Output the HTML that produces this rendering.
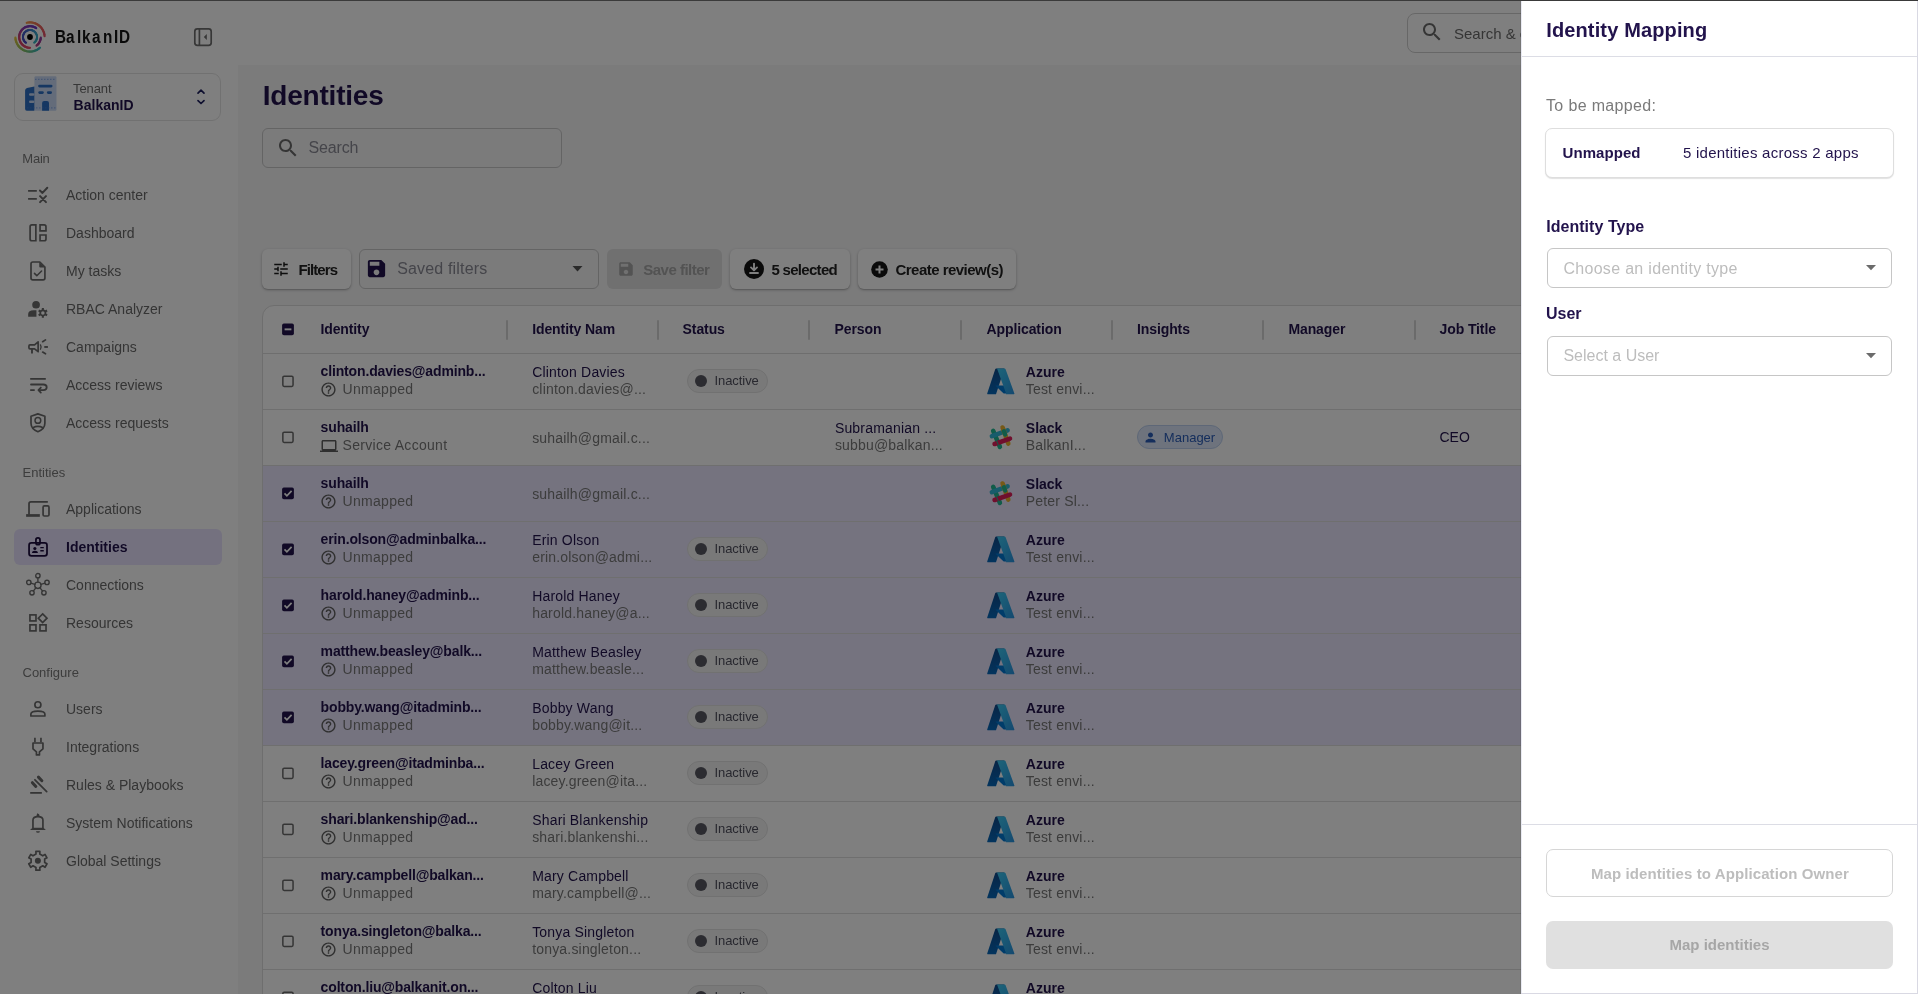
<!DOCTYPE html>
<html><head><meta charset="utf-8"><title>Identities</title>
<style>
html,body{margin:0;padding:0;width:1918px;height:994px;overflow:hidden;background:#fff;}
body{position:relative;font-family:"Liberation Sans",sans-serif;}
#root{position:absolute;left:0;top:0;width:1918px;height:994px;overflow:hidden;will-change:transform;}
.t{position:absolute;white-space:nowrap;line-height:1;font-family:"Liberation Sans",sans-serif;}
svg{overflow:visible}
</style></head><body>
<div id="root"><div style="position:absolute;left:0px;top:0px;width:1918px;height:994px;background:#fff"></div>
<div style="position:absolute;left:238px;top:65px;width:1680px;height:929px;background:#f6f6f7"></div>
<svg style="position:absolute;left:14px;top:21px;" width="32" height="32" viewBox="0 0 32 32"><path d="M12.72 1.77 A14.6 14.6 0 0 1 14.28 1.50" stroke="#f4974b" stroke-width="2.2" fill="none" stroke-linecap="round"/><path d="M14.28 1.50 A14.6 14.6 0 0 1 15.87 1.40" stroke="#f3914d" stroke-width="2.2" fill="none" stroke-linecap="round"/><path d="M15.87 1.40 A14.6 14.6 0 0 1 17.46 1.47" stroke="#f28b4f" stroke-width="2.2" fill="none" stroke-linecap="round"/><path d="M17.46 1.47 A14.6 14.6 0 0 1 19.04 1.72" stroke="#f18551" stroke-width="2.2" fill="none" stroke-linecap="round"/><path d="M19.04 1.72 A14.6 14.6 0 0 1 20.57 2.13" stroke="#f07f53" stroke-width="2.2" fill="none" stroke-linecap="round"/><path d="M20.57 2.13 A14.6 14.6 0 0 1 22.05 2.71" stroke="#ef7955" stroke-width="2.2" fill="none" stroke-linecap="round"/><path d="M22.05 2.71 A14.6 14.6 0 0 1 23.46 3.45" stroke="#ee7357" stroke-width="2.2" fill="none" stroke-linecap="round"/><path d="M23.46 3.45 A14.6 14.6 0 0 1 24.79 4.34" stroke="#ed6d59" stroke-width="2.2" fill="none" stroke-linecap="round"/><path d="M24.79 4.34 A14.6 14.6 0 0 1 26.00 5.37" stroke="#eb685b" stroke-width="2.2" fill="none" stroke-linecap="round"/><path d="M26.00 5.37 A14.6 14.6 0 0 1 27.10 6.52" stroke="#ea655d" stroke-width="2.2" fill="none" stroke-linecap="round"/><path d="M27.10 6.52 A14.6 14.6 0 0 1 28.07 7.78" stroke="#e9625f" stroke-width="2.2" fill="none" stroke-linecap="round"/><path d="M28.07 7.78 A14.6 14.6 0 0 1 28.89 9.15" stroke="#e85f61" stroke-width="2.2" fill="none" stroke-linecap="round"/><path d="M28.89 9.15 A14.6 14.6 0 0 1 29.56 10.59" stroke="#e65b63" stroke-width="2.2" fill="none" stroke-linecap="round"/><path d="M29.56 10.59 A14.6 14.6 0 0 1 30.07 12.10" stroke="#e55865" stroke-width="2.2" fill="none" stroke-linecap="round"/><path d="M30.07 12.10 A14.6 14.6 0 0 1 30.41 13.65" stroke="#e45567" stroke-width="2.2" fill="none" stroke-linecap="round"/><path d="M30.41 13.65 A14.6 14.6 0 0 1 30.58 15.24" stroke="#e35269" stroke-width="2.2" fill="none" stroke-linecap="round"/><path d="M1.41 16.51 A14.6 14.6 0 0 0 1.55 18.09" stroke="#e4c23f" stroke-width="2.2" fill="none" stroke-linecap="round"/><path d="M1.55 18.09 A14.6 14.6 0 0 0 1.86 19.65" stroke="#dbc242" stroke-width="2.2" fill="none" stroke-linecap="round"/><path d="M1.86 19.65 A14.6 14.6 0 0 0 2.34 21.16" stroke="#d1c145" stroke-width="2.2" fill="none" stroke-linecap="round"/><path d="M2.34 21.16 A14.6 14.6 0 0 0 2.99 22.62" stroke="#c8c148" stroke-width="2.2" fill="none" stroke-linecap="round"/><path d="M2.99 22.62 A14.6 14.6 0 0 0 3.78 23.99" stroke="#bec14b" stroke-width="2.2" fill="none" stroke-linecap="round"/><path d="M3.78 23.99 A14.6 14.6 0 0 0 4.72 25.27" stroke="#b5c04e" stroke-width="2.2" fill="none" stroke-linecap="round"/><path d="M4.72 25.27 A14.6 14.6 0 0 0 5.80 26.44" stroke="#abc051" stroke-width="2.2" fill="none" stroke-linecap="round"/><path d="M5.80 26.44 A14.6 14.6 0 0 0 6.99 27.49" stroke="#a2c054" stroke-width="2.2" fill="none" stroke-linecap="round"/><path d="M6.99 27.49 A14.6 14.6 0 0 0 8.29 28.40" stroke="#98bf57" stroke-width="2.2" fill="none" stroke-linecap="round"/><path d="M8.29 28.40 A14.6 14.6 0 0 0 9.69 29.16" stroke="#8fbf5a" stroke-width="2.2" fill="none" stroke-linecap="round"/><path d="M9.69 29.16 A14.6 14.6 0 0 0 11.16 29.77" stroke="#86be64" stroke-width="2.2" fill="none" stroke-linecap="round"/><path d="M11.16 29.77 A14.6 14.6 0 0 0 12.68 30.22" stroke="#7ebe6d" stroke-width="2.2" fill="none" stroke-linecap="round"/><path d="M12.68 30.22 A14.6 14.6 0 0 0 14.24 30.49" stroke="#76bd77" stroke-width="2.2" fill="none" stroke-linecap="round"/><path d="M14.24 30.49 A14.6 14.6 0 0 0 15.83 30.60" stroke="#6dbd80" stroke-width="2.2" fill="none" stroke-linecap="round"/><path d="M15.83 30.60 A14.6 14.6 0 0 0 17.42 30.53" stroke="#65bc89" stroke-width="2.2" fill="none" stroke-linecap="round"/><path d="M17.42 30.53 A14.6 14.6 0 0 0 18.99 30.29" stroke="#5dbb93" stroke-width="2.2" fill="none" stroke-linecap="round"/><path d="M18.99 30.29 A14.6 14.6 0 0 0 20.52 29.88" stroke="#54bb9c" stroke-width="2.2" fill="none" stroke-linecap="round"/><path d="M20.52 29.88 A14.6 14.6 0 0 0 22.00 29.31" stroke="#4cbaa5" stroke-width="2.2" fill="none" stroke-linecap="round"/><path d="M22.00 29.31 A14.6 14.6 0 0 0 23.42 28.58" stroke="#44baaf" stroke-width="2.2" fill="none" stroke-linecap="round"/><path d="M23.42 28.58 A14.6 14.6 0 0 0 24.74 27.70" stroke="#3bb9b8" stroke-width="2.2" fill="none" stroke-linecap="round"/><path d="M24.74 27.70 A14.6 14.6 0 0 0 25.96 26.68" stroke="#33b8c1" stroke-width="2.2" fill="none" stroke-linecap="round"/><path d="M22.19 7.15 A10.8 10.8 0 0 0 21.21 6.54" stroke="#6b38c7" stroke-width="2.2" fill="none" stroke-linecap="round"/><path d="M21.21 6.54 A10.8 10.8 0 0 0 20.17 6.04" stroke="#6e38c5" stroke-width="2.2" fill="none" stroke-linecap="round"/><path d="M20.17 6.04 A10.8 10.8 0 0 0 19.08 5.65" stroke="#7138c3" stroke-width="2.2" fill="none" stroke-linecap="round"/><path d="M19.08 5.65 A10.8 10.8 0 0 0 17.95 5.38" stroke="#7339c1" stroke-width="2.2" fill="none" stroke-linecap="round"/><path d="M17.95 5.38 A10.8 10.8 0 0 0 16.81 5.23" stroke="#7639bf" stroke-width="2.2" fill="none" stroke-linecap="round"/><path d="M16.81 5.23 A10.8 10.8 0 0 0 15.65 5.21" stroke="#7839bd" stroke-width="2.2" fill="none" stroke-linecap="round"/><path d="M15.65 5.21 A10.8 10.8 0 0 0 14.50 5.31" stroke="#7b39bb" stroke-width="2.2" fill="none" stroke-linecap="round"/><path d="M14.50 5.31 A10.8 10.8 0 0 0 13.36 5.53" stroke="#7e39b9" stroke-width="2.2" fill="none" stroke-linecap="round"/><path d="M13.36 5.53 A10.8 10.8 0 0 0 12.26 5.87" stroke="#8039b7" stroke-width="2.2" fill="none" stroke-linecap="round"/><path d="M12.26 5.87 A10.8 10.8 0 0 0 11.19 6.33" stroke="#833ab5" stroke-width="2.2" fill="none" stroke-linecap="round"/><path d="M11.19 6.33 A10.8 10.8 0 0 0 10.19 6.90" stroke="#853ab3" stroke-width="2.2" fill="none" stroke-linecap="round"/><path d="M10.19 6.90 A10.8 10.8 0 0 0 9.25 7.57" stroke="#883ab1" stroke-width="2.2" fill="none" stroke-linecap="round"/><path d="M9.25 7.57 A10.8 10.8 0 0 0 8.38 8.34" stroke="#8c3aae" stroke-width="2.2" fill="none" stroke-linecap="round"/><path d="M8.38 8.34 A10.8 10.8 0 0 0 7.61 9.20" stroke="#943ba7" stroke-width="2.2" fill="none" stroke-linecap="round"/><path d="M7.61 9.20 A10.8 10.8 0 0 0 6.93 10.14" stroke="#9c3c9f" stroke-width="2.2" fill="none" stroke-linecap="round"/><path d="M6.93 10.14 A10.8 10.8 0 0 0 6.35 11.14" stroke="#a43c97" stroke-width="2.2" fill="none" stroke-linecap="round"/><path d="M6.35 11.14 A10.8 10.8 0 0 0 5.89 12.21" stroke="#ac3d90" stroke-width="2.2" fill="none" stroke-linecap="round"/><path d="M5.89 12.21 A10.8 10.8 0 0 0 5.54 13.31" stroke="#b43e88" stroke-width="2.2" fill="none" stroke-linecap="round"/><path d="M5.54 13.31 A10.8 10.8 0 0 0 5.31 14.44" stroke="#bc3e81" stroke-width="2.2" fill="none" stroke-linecap="round"/><path d="M5.31 14.44 A10.8 10.8 0 0 0 5.21 15.60" stroke="#c43f79" stroke-width="2.2" fill="none" stroke-linecap="round"/><path d="M5.21 15.60 A10.8 10.8 0 0 0 5.23 16.75" stroke="#cc4072" stroke-width="2.2" fill="none" stroke-linecap="round"/><path d="M5.23 16.75 A10.8 10.8 0 0 0 5.37 17.90" stroke="#d1406e" stroke-width="2.2" fill="none" stroke-linecap="round"/><path d="M5.37 17.90 A10.8 10.8 0 0 0 5.63 19.03" stroke="#d2416d" stroke-width="2.2" fill="none" stroke-linecap="round"/><path d="M5.63 19.03 A10.8 10.8 0 0 0 6.02 20.12" stroke="#d3426d" stroke-width="2.2" fill="none" stroke-linecap="round"/><path d="M6.02 20.12 A10.8 10.8 0 0 0 6.52 21.17" stroke="#d4426c" stroke-width="2.2" fill="none" stroke-linecap="round"/><path d="M6.52 21.17 A10.8 10.8 0 0 0 7.12 22.15" stroke="#d5436b" stroke-width="2.2" fill="none" stroke-linecap="round"/><path d="M7.12 22.15 A10.8 10.8 0 0 0 7.83 23.07" stroke="#d6446b" stroke-width="2.2" fill="none" stroke-linecap="round"/><path d="M7.83 23.07 A10.8 10.8 0 0 0 8.63 23.90" stroke="#d7456a" stroke-width="2.2" fill="none" stroke-linecap="round"/><path d="M8.63 23.90 A10.8 10.8 0 0 0 9.52 24.64" stroke="#d9456a" stroke-width="2.2" fill="none" stroke-linecap="round"/><path d="M9.52 24.64 A10.8 10.8 0 0 0 10.48 25.29" stroke="#da4669" stroke-width="2.2" fill="none" stroke-linecap="round"/><path d="M10.48 25.29 A10.8 10.8 0 0 0 11.51 25.82" stroke="#db4769" stroke-width="2.2" fill="none" stroke-linecap="round"/><path d="M11.51 25.82 A10.8 10.8 0 0 0 12.59 26.25" stroke="#dc4868" stroke-width="2.2" fill="none" stroke-linecap="round"/><path d="M12.59 26.25 A10.8 10.8 0 0 0 13.70 26.55" stroke="#dd4867" stroke-width="2.2" fill="none" stroke-linecap="round"/><path d="M13.70 26.55 A10.8 10.8 0 0 0 14.84 26.74" stroke="#de4967" stroke-width="2.2" fill="none" stroke-linecap="round"/><path d="M14.84 26.74 A10.8 10.8 0 0 0 16.00 26.80" stroke="#df4a66" stroke-width="2.2" fill="none" stroke-linecap="round"/><path d="M26.79 16.57 A10.8 10.8 0 0 1 26.66 17.74" stroke="#8c3aa6" stroke-width="2.2" fill="none" stroke-linecap="round"/><path d="M26.66 17.74 A10.8 10.8 0 0 1 26.41 18.89" stroke="#923aa0" stroke-width="2.2" fill="none" stroke-linecap="round"/><path d="M26.41 18.89 A10.8 10.8 0 0 1 26.03 20.00" stroke="#963a9c" stroke-width="2.2" fill="none" stroke-linecap="round"/><path d="M26.03 20.00 A10.8 10.8 0 0 1 25.54 21.07" stroke="#9c3a96" stroke-width="2.2" fill="none" stroke-linecap="round"/><path d="M25.54 21.07 A10.8 10.8 0 0 1 24.93 22.08" stroke="#a03a92" stroke-width="2.2" fill="none" stroke-linecap="round"/><path d="M24.93 22.08 A10.8 10.8 0 0 1 24.21 23.01" stroke="#a63a8c" stroke-width="2.2" fill="none" stroke-linecap="round"/><path d="M24.21 23.01 A10.8 10.8 0 0 1 23.40 23.87" stroke="#aa3a88" stroke-width="2.2" fill="none" stroke-linecap="round"/><path d="M23.40 23.87 A10.8 10.8 0 0 1 22.50 24.63" stroke="#b03a82" stroke-width="2.2" fill="none" stroke-linecap="round"/><path d="M12.09 21.80 A7.0 7.0 0 0 1 11.50 21.36" stroke="#4a47c0" stroke-width="2.0" fill="none" stroke-linecap="round"/><path d="M11.50 21.36 A7.0 7.0 0 0 1 10.96 20.86" stroke="#4948c1" stroke-width="2.0" fill="none" stroke-linecap="round"/><path d="M10.96 20.86 A7.0 7.0 0 0 1 10.47 20.30" stroke="#4949c1" stroke-width="2.0" fill="none" stroke-linecap="round"/><path d="M10.47 20.30 A7.0 7.0 0 0 1 10.05 19.69" stroke="#484bc1" stroke-width="2.0" fill="none" stroke-linecap="round"/><path d="M10.05 19.69 A7.0 7.0 0 0 1 9.70 19.05" stroke="#474cc2" stroke-width="2.0" fill="none" stroke-linecap="round"/><path d="M9.70 19.05 A7.0 7.0 0 0 1 9.41 18.37" stroke="#474dc2" stroke-width="2.0" fill="none" stroke-linecap="round"/><path d="M9.41 18.37 A7.0 7.0 0 0 1 9.20 17.66" stroke="#464fc3" stroke-width="2.0" fill="none" stroke-linecap="round"/><path d="M9.20 17.66 A7.0 7.0 0 0 1 9.06 16.93" stroke="#4650c3" stroke-width="2.0" fill="none" stroke-linecap="round"/><path d="M9.06 16.93 A7.0 7.0 0 0 1 9.00 16.20" stroke="#4552c4" stroke-width="2.0" fill="none" stroke-linecap="round"/><path d="M9.00 16.20 A7.0 7.0 0 0 1 9.02 15.46" stroke="#4553c4" stroke-width="2.0" fill="none" stroke-linecap="round"/><path d="M9.02 15.46 A7.0 7.0 0 0 1 9.12 14.73" stroke="#4454c4" stroke-width="2.0" fill="none" stroke-linecap="round"/><path d="M9.12 14.73 A7.0 7.0 0 0 1 9.29 14.01" stroke="#4356c5" stroke-width="2.0" fill="none" stroke-linecap="round"/><path d="M9.29 14.01 A7.0 7.0 0 0 1 9.53 13.32" stroke="#4357c5" stroke-width="2.0" fill="none" stroke-linecap="round"/><path d="M9.53 13.32 A7.0 7.0 0 0 1 9.85 12.65" stroke="#4258c6" stroke-width="2.0" fill="none" stroke-linecap="round"/><path d="M9.85 12.65 A7.0 7.0 0 0 1 10.24 12.02" stroke="#425ac6" stroke-width="2.0" fill="none" stroke-linecap="round"/><path d="M10.24 12.02 A7.0 7.0 0 0 1 10.69 11.44" stroke="#415bc6" stroke-width="2.0" fill="none" stroke-linecap="round"/><path d="M10.69 11.44 A7.0 7.0 0 0 1 11.20 10.90" stroke="#415cc7" stroke-width="2.0" fill="none" stroke-linecap="round"/><path d="M11.20 10.90 A7.0 7.0 0 0 1 11.76 10.43" stroke="#405ec7" stroke-width="2.0" fill="none" stroke-linecap="round"/><path d="M11.76 10.43 A7.0 7.0 0 0 1 12.37 10.01" stroke="#3f5fc8" stroke-width="2.0" fill="none" stroke-linecap="round"/><path d="M12.37 10.01 A7.0 7.0 0 0 1 13.02 9.66" stroke="#3f61c8" stroke-width="2.0" fill="none" stroke-linecap="round"/><path d="M13.02 9.66 A7.0 7.0 0 0 1 13.71 9.39" stroke="#3f66c8" stroke-width="2.0" fill="none" stroke-linecap="round"/><path d="M13.71 9.39 A7.0 7.0 0 0 1 14.42 9.18" stroke="#3e6ac8" stroke-width="2.0" fill="none" stroke-linecap="round"/><path d="M14.42 9.18 A7.0 7.0 0 0 1 15.14 9.05" stroke="#3e6fc8" stroke-width="2.0" fill="none" stroke-linecap="round"/><path d="M15.14 9.05 A7.0 7.0 0 0 1 15.88 9.00" stroke="#3e73c8" stroke-width="2.0" fill="none" stroke-linecap="round"/><path d="M15.88 9.00 A7.0 7.0 0 0 1 16.62 9.03" stroke="#3d78c8" stroke-width="2.0" fill="none" stroke-linecap="round"/><path d="M16.62 9.03 A7.0 7.0 0 0 1 17.35 9.13" stroke="#3d7cc8" stroke-width="2.0" fill="none" stroke-linecap="round"/><path d="M17.35 9.13 A7.0 7.0 0 0 1 18.06 9.31" stroke="#3c80c8" stroke-width="2.0" fill="none" stroke-linecap="round"/><path d="M18.06 9.31 A7.0 7.0 0 0 1 18.75 9.56" stroke="#3c85c8" stroke-width="2.0" fill="none" stroke-linecap="round"/><path d="M18.75 9.56 A7.0 7.0 0 0 1 19.42 9.89" stroke="#3c89c8" stroke-width="2.0" fill="none" stroke-linecap="round"/><path d="M19.42 9.89 A7.0 7.0 0 0 1 20.04 10.28" stroke="#3b8ec8" stroke-width="2.0" fill="none" stroke-linecap="round"/><path d="M20.04 10.28 A7.0 7.0 0 0 1 20.62 10.74" stroke="#3b92c8" stroke-width="2.0" fill="none" stroke-linecap="round"/><path d="M20.62 10.74 A7.0 7.0 0 0 1 21.15 11.26" stroke="#3b97c8" stroke-width="2.0" fill="none" stroke-linecap="round"/><path d="M21.15 11.26 A7.0 7.0 0 0 1 21.62 11.82" stroke="#3a9bc8" stroke-width="2.0" fill="none" stroke-linecap="round"/><path d="M21.62 11.82 A7.0 7.0 0 0 1 22.03 12.44" stroke="#3aa0c8" stroke-width="2.0" fill="none" stroke-linecap="round"/><path d="M22.03 12.44 A7.0 7.0 0 0 1 22.37 13.09" stroke="#3aa1c8" stroke-width="2.0" fill="none" stroke-linecap="round"/><path d="M22.37 13.09 A7.0 7.0 0 0 1 22.64 13.78" stroke="#3aa3c7" stroke-width="2.0" fill="none" stroke-linecap="round"/><path d="M22.64 13.78 A7.0 7.0 0 0 1 22.84 14.49" stroke="#39a4c6" stroke-width="2.0" fill="none" stroke-linecap="round"/><path d="M22.84 14.49 A7.0 7.0 0 0 1 22.96 15.22" stroke="#39a5c6" stroke-width="2.0" fill="none" stroke-linecap="round"/><path d="M22.96 15.22 A7.0 7.0 0 0 1 23.00 15.95" stroke="#39a7c5" stroke-width="2.0" fill="none" stroke-linecap="round"/><path d="M23.00 15.95 A7.0 7.0 0 0 1 22.97 16.69" stroke="#39a8c5" stroke-width="2.0" fill="none" stroke-linecap="round"/><path d="M22.97 16.69 A7.0 7.0 0 0 1 22.85 17.42" stroke="#39aac4" stroke-width="2.0" fill="none" stroke-linecap="round"/><path d="M22.85 17.42 A7.0 7.0 0 0 1 22.67 18.13" stroke="#38abc4" stroke-width="2.0" fill="none" stroke-linecap="round"/><path d="M22.67 18.13 A7.0 7.0 0 0 1 22.41 18.82" stroke="#38acc3" stroke-width="2.0" fill="none" stroke-linecap="round"/><path d="M22.41 18.82 A7.0 7.0 0 0 1 22.07 19.48" stroke="#38aec2" stroke-width="2.0" fill="none" stroke-linecap="round"/><path d="M22.07 19.48 A7.0 7.0 0 0 1 21.67 20.10" stroke="#38afc2" stroke-width="2.0" fill="none" stroke-linecap="round"/><path d="M21.67 20.10 A7.0 7.0 0 0 1 21.21 20.68" stroke="#38b1c1" stroke-width="2.0" fill="none" stroke-linecap="round"/><path d="M21.21 20.68 A7.0 7.0 0 0 1 20.69 21.20" stroke="#37b2c1" stroke-width="2.0" fill="none" stroke-linecap="round"/><path d="M20.69 21.20 A7.0 7.0 0 0 1 20.11 21.66" stroke="#37b3c0" stroke-width="2.0" fill="none" stroke-linecap="round"/><circle cx="16" cy="16" r="2.9" fill="#000"/></svg>
<div class="t" style="left:54.5px;top:27.76px;font-size:18px;font-weight:700;color:#151515;transform:scaleX(0.85);transform-origin:0 0;">B</div>
<div class="t" style="left:66.2px;top:27.76px;font-size:18px;font-weight:700;color:#151515;transform:scaleX(0.85);transform-origin:0 0;">a</div>
<div class="t" style="left:77.2px;top:27.76px;font-size:18px;font-weight:700;color:#151515;transform:scaleX(0.85);transform-origin:0 0;">l</div>
<div class="t" style="left:82.4px;top:27.76px;font-size:18px;font-weight:700;color:#151515;transform:scaleX(0.85);transform-origin:0 0;">k</div>
<div class="t" style="left:91.8px;top:27.76px;font-size:18px;font-weight:700;color:#151515;transform:scaleX(0.85);transform-origin:0 0;">a</div>
<div class="t" style="left:103.1px;top:27.76px;font-size:18px;font-weight:700;color:#151515;transform:scaleX(0.85);transform-origin:0 0;">n</div>
<div class="t" style="left:113.9px;top:27.76px;font-size:18px;font-weight:700;color:#151515;transform:scaleX(0.85);transform-origin:0 0;">I</div>
<div class="t" style="left:118.8px;top:27.76px;font-size:18px;font-weight:700;color:#151515;transform:scaleX(0.85);transform-origin:0 0;">D</div>
<svg style="position:absolute;left:191.6px;top:26px;" width="22" height="22" viewBox="0 0 22 22"><rect x="2.8" y="2.8" width="16.4" height="16.6" rx="2.6" fill="none" stroke="#6e6e6e" stroke-width="1.7"/><line x1="7.4" y1="3" x2="7.4" y2="19" stroke="#6e6e6e" stroke-width="1.7"/><path d="M14.8 8 L11.8 11 L14.8 14 Z" fill="#6e6e6e"/></svg>
<div style="position:absolute;left:14px;top:73px;width:207px;height:48px;box-sizing:border-box;border:1px solid #e3e3e3;border-radius:9px;background:#fff"></div>
<svg style="position:absolute;left:25px;top:76px;" width="32" height="35" viewBox="0 0 32 35">
<rect x="9.4" y="0.2" width="22.1" height="34.5" rx="1.2" fill="#c9d9f5"/>
<path d="M9.4 10.4 L2 12 Q0.1 12.5 0.1 14.5 L0.1 33 Q0.1 34.7 1.8 34.7 L9.4 34.7 Z" fill="#2c6fc4"/>
<rect x="4" y="17.2" width="5.4" height="2.5" rx="1.2" fill="#c9d9f5"/>
<rect x="4" y="24.5" width="5.4" height="2.5" rx="1.2" fill="#c9d9f5"/>
<rect x="13.1" y="8.8" width="14.4" height="2.6" rx="1.3" fill="#2c6fc4"/>
<rect x="13.3" y="15.2" width="5.5" height="2.7" rx="1.3" fill="#2c6fc4"/>
<rect x="21.9" y="15.2" width="5.1" height="2.7" rx="1.3" fill="#2c6fc4"/>
<path d="M17.1 34.7 L17.1 27 Q17.1 25 19.1 25 L22 25 Q24 25 24 27 L24 34.7 Z" fill="#2c6fc4"/>
<line x1="10" y1="3.3" x2="31" y2="3.3" stroke="#4f7fd6" stroke-width="0.6" stroke-dasharray="1.5 1.5"/>
<line x1="2" y1="31.9" x2="31" y2="31.9" stroke="#4f7fd6" stroke-width="0.6" stroke-dasharray="1.5 1.5"/>
</svg>
<div class="t" style="left:73.0px;top:81.99px;font-size:13px;font-weight:400;color:#6f6f6f;letter-spacing:-0.086px;">Tenant</div>
<div class="t" style="left:73.6px;top:98.15px;font-size:14px;font-weight:700;color:#22134c;letter-spacing:0.013px;">BalkanID</div>
<svg style="position:absolute;left:194px;top:86px;" width="14" height="22" viewBox="0 0 14 22"><path d="M4 7.1 L7 4.2 L10 7.1" fill="none" stroke="#1d1f5e" stroke-width="1.7" stroke-linecap="round" stroke-linejoin="round"/><path d="M4 14.6 L7 17.5 L10 14.6" fill="none" stroke="#1d1f5e" stroke-width="1.7" stroke-linecap="round" stroke-linejoin="round"/></svg>
<div class="t" style="left:22.3px;top:152.19px;font-size:13px;font-weight:400;color:#7a7a7a;letter-spacing:-0.226px;">Main</div>
<div class="t" style="left:22.5px;top:465.79px;font-size:13px;font-weight:400;color:#7a7a7a;">Entities</div>
<div class="t" style="left:22.5px;top:665.99px;font-size:13px;font-weight:400;color:#7a7a7a;">Configure</div>
<div style="position:absolute;left:14px;top:529px;width:208px;height:36px;background:#e8e3fe;border-radius:6px"></div>
<svg style="position:absolute;left:24px;top:182px;" width="30" height="30" viewBox="0 0 994 994"><path d="M135 295 H425 M135 562 H425" fill="none" stroke="#6b6b6b" stroke-width="60" stroke-linecap="butt" stroke-linejoin="round"/><path d="M528 282 L612 362 L772 192" fill="none" stroke="#6b6b6b" stroke-width="66" stroke-linecap="round" stroke-linejoin="round"/><path d="M532 468 L728 668 M728 468 L532 668" fill="none" stroke="#6b6b6b" stroke-width="66" stroke-linecap="round" stroke-linejoin="round"/></svg>
<div class="t" style="left:66.0px;top:187.95px;font-size:14px;font-weight:400;color:#6a6a6a;">Action center</div>
<svg style="position:absolute;left:24px;top:220px;" width="30" height="30" viewBox="0 0 994 994"><g fill="none" stroke="#6b6b6b" stroke-width="56" stroke-linecap="butt" stroke-linejoin="miter"><path d="M393 162 H262 Q202 162 202 222 V628 Q202 688 262 688 H393 Z"/><path d="M532 162 H668 Q728 162 728 222 V358 H532 Z"/><path d="M532 497 H728 V628 Q728 688 668 688 H532 Z"/></g></svg>
<div class="t" style="left:66.0px;top:225.95px;font-size:14px;font-weight:400;color:#6a6a6a;">Dashboard</div>
<svg style="position:absolute;left:24px;top:258px;" width="30" height="30" viewBox="0 0 994 994"><path d="M232 192 Q232 132 292 132 H525 L693 300 V663 Q693 723 633 723 H292 Q232 723 232 663 Z" fill="none" stroke="#6b6b6b" stroke-width="56" stroke-linecap="round" stroke-linejoin="round"/><path d="M505 132 L693 318 H540 Q505 318 505 283 Z" fill="#6b6b6b"/><path d="M348 508 L425 588 L582 432" fill="none" stroke="#6b6b6b" stroke-width="52" stroke-linecap="round" stroke-linejoin="round"/></svg>
<div class="t" style="left:66.0px;top:263.95px;font-size:14px;font-weight:400;color:#6a6a6a;">My tasks</div>
<svg style="position:absolute;left:24px;top:296px;" width="30" height="30" viewBox="0 0 994 994"><circle cx="400" cy="290" r="128" fill="#6b6b6b"/><path d="M138 690 V600 Q138 472 320 470 H412 L412 690 Z" fill="#6b6b6b"/><path d="M592.1 446.7 L589.0 399.0 L661.0 399.0 L657.9 446.7 L706.7 474.8 L746.5 448.3 L782.4 510.7 L739.6 531.9 L739.6 588.1 L782.4 609.3 L746.5 671.7 L706.7 645.2 L657.9 673.3 L661.0 721.0 L589.0 721.0 L592.1 673.3 L543.3 645.2 L503.5 671.7 L467.6 609.3 L510.4 588.1 L510.4 531.9 L467.6 510.7 L503.5 448.3 L543.3 474.8 Z" fill="#6b6b6b"/><circle cx="625" cy="560" r="58" fill="#fff"/></svg>
<div class="t" style="left:66.0px;top:301.95px;font-size:14px;font-weight:400;color:#6a6a6a;">RBAC Analyzer</div>
<svg style="position:absolute;left:24px;top:334px;" width="30" height="30" viewBox="0 0 994 994"><path d="M468 262 V585 L350 490 H198 Q164 490 164 455 V395 Q164 362 198 362 H350 Z" fill="none" stroke="#6b6b6b" stroke-width="56" stroke-linecap="round" stroke-linejoin="round"/><path d="M265 495 V650" fill="none" stroke="#6b6b6b" stroke-width="62" stroke-linecap="butt" stroke-linejoin="round"/><path d="M545 360 Q590 432 545 505" fill="none" stroke="#6b6b6b" stroke-width="44" stroke-linecap="round" stroke-linejoin="round"/><path d="M672 430 H792" fill="none" stroke="#6b6b6b" stroke-width="62" stroke-linecap="butt" stroke-linejoin="round"/><path d="M618 255 L712 195 M618 600 L712 655" fill="none" stroke="#6b6b6b" stroke-width="58" stroke-linecap="round" stroke-linejoin="round"/></svg>
<div class="t" style="left:66.0px;top:339.95px;font-size:14px;font-weight:400;color:#6a6a6a;">Campaigns</div>
<svg style="position:absolute;left:24px;top:372px;" width="30" height="30" viewBox="0 0 994 994"><path d="M205 230 H722 M205 598 H355" fill="none" stroke="#6b6b6b" stroke-width="60" stroke-linecap="butt" stroke-linejoin="round"/><path d="M232 415 H640 Q752 415 752 507 Q752 598 640 598 H490" fill="none" stroke="#6b6b6b" stroke-width="60" stroke-linecap="round" stroke-linejoin="round"/><path d="M558 515 L478 598 L558 680" fill="none" stroke="#6b6b6b" stroke-width="58" stroke-linecap="round" stroke-linejoin="round"/></svg>
<div class="t" style="left:66.0px;top:377.95px;font-size:14px;font-weight:400;color:#6a6a6a;">Access reviews</div>
<svg style="position:absolute;left:24px;top:410px;" width="30" height="30" viewBox="0 0 994 994"><path d="M460 128 L692 205 V440 Q692 628 460 720 Q232 628 232 440 V205 Z" fill="none" stroke="#6b6b6b" stroke-width="56" stroke-linecap="round" stroke-linejoin="round"/><circle cx="460" cy="345" r="95" fill="none" stroke="#6b6b6b" stroke-width="50" stroke-linecap="round" stroke-linejoin="round"/><path d="M292 588 Q460 500 630 588" fill="none" stroke="#6b6b6b" stroke-width="56" stroke-linecap="round" stroke-linejoin="round"/></svg>
<div class="t" style="left:66.0px;top:415.95px;font-size:14px;font-weight:400;color:#6a6a6a;">Access requests</div>
<svg style="position:absolute;left:24px;top:496px;" width="30" height="30" viewBox="0 0 994 994"><path d="M790 198 H228 Q166 198 166 260 V625" fill="none" stroke="#6b6b6b" stroke-width="58" stroke-linecap="butt" stroke-linejoin="miter"/><path d="M70 645 H525" fill="none" stroke="#6b6b6b" stroke-width="90" stroke-linecap="butt" stroke-linejoin="round"/><rect x="632" y="328" width="196" height="335" rx="42" fill="none" stroke="#6b6b6b" stroke-width="56" stroke-linecap="round" stroke-linejoin="round"/></svg>
<div class="t" style="left:66.0px;top:501.95px;font-size:14px;font-weight:400;color:#6a6a6a;">Applications</div>
<svg style="position:absolute;left:24px;top:532px;" width="30" height="30" viewBox="0 0 994 994"><rect x="168" y="360" width="594" height="432" rx="78" fill="none" stroke="#1b0b3d" stroke-width="58" stroke-linecap="round" stroke-linejoin="round"/><rect x="395" y="197" width="135" height="225" rx="66" fill="none" stroke="#1b0b3d" stroke-width="58" stroke-linecap="round" stroke-linejoin="round"/><circle cx="360" cy="545" r="52" fill="#1b0b3d"/><path d="M265 692 Q265 625 362 625 Q460 625 460 692 Z" fill="#1b0b3d"/><path d="M540 518 H655 M540 620 H655" fill="none" stroke="#1b0b3d" stroke-width="46" stroke-linecap="butt" stroke-linejoin="round"/></svg>
<div class="t" style="left:66.0px;top:540.25px;font-size:14px;font-weight:700;color:#22134c;">Identities</div>
<svg style="position:absolute;left:24px;top:572px;" width="30" height="30" viewBox="0 0 994 994"><g fill="none" stroke="#6b6b6b" stroke-width="46" stroke-linecap="round" stroke-linejoin="round"><circle cx="460" cy="440" r="105"/><circle cx="460" cy="122" r="72"/><circle cx="160" cy="345" r="72"/><circle cx="762" cy="345" r="72"/><circle cx="265" cy="690" r="72"/><circle cx="660" cy="690" r="72"/><path d="M460 194 V335 M228 368 L358 410 M694 368 L562 410 M308 632 L392 525 M617 632 L530 525"/></g></svg>
<div class="t" style="left:66.0px;top:577.95px;font-size:14px;font-weight:400;color:#6a6a6a;">Connections</div>
<svg style="position:absolute;left:24px;top:610px;" width="30" height="30" viewBox="0 0 994 994"><g fill="none" stroke="#6b6b6b" stroke-width="56" stroke-linecap="butt" stroke-linejoin="miter"><rect x="197" y="162" width="200" height="200"/><rect x="197" y="492" width="200" height="200"/><rect x="530" y="492" width="200" height="200"/><path d="M618 128 L762 272 L618 416 L474 272 Z"/></g></svg>
<div class="t" style="left:66.0px;top:615.95px;font-size:14px;font-weight:400;color:#6a6a6a;">Resources</div>
<svg style="position:absolute;left:24px;top:696px;" width="30" height="30" viewBox="0 0 994 994"><circle cx="460" cy="290" r="100" fill="none" stroke="#6b6b6b" stroke-width="56" stroke-linecap="round" stroke-linejoin="round"/><path d="M228 662 V600 Q228 498 460 498 Q692 498 692 600 V662 Z" fill="none" stroke="#6b6b6b" stroke-width="56" stroke-linecap="round" stroke-linejoin="round"/></svg>
<div class="t" style="left:66.0px;top:701.95px;font-size:14px;font-weight:400;color:#6a6a6a;">Users</div>
<svg style="position:absolute;left:24px;top:734px;" width="30" height="30" viewBox="0 0 994 994"><path d="M362 128 V272 M562 128 V272" fill="none" stroke="#6b6b6b" stroke-width="56" stroke-linecap="butt" stroke-linejoin="round"/><path d="M298 298 H628 V490 L512 590 V692 H412 V590 L298 490 Z" fill="none" stroke="#6b6b6b" stroke-width="56" stroke-linecap="butt" stroke-linejoin="round"/></svg>
<div class="t" style="left:66.0px;top:739.95px;font-size:14px;font-weight:400;color:#6a6a6a;">Integrations</div>
<svg style="position:absolute;left:24px;top:772px;" width="30" height="30" viewBox="0 0 994 994"><path d="M362 258 L752 650" fill="none" stroke="#6b6b6b" stroke-width="58" stroke-linecap="round" stroke-linejoin="round"/><path d="M478 170 L592 290 M278 355 L392 480" fill="none" stroke="#6b6b6b" stroke-width="100" stroke-linecap="round" stroke-linejoin="round"/><path d="M205 692 H592" fill="none" stroke="#6b6b6b" stroke-width="60" stroke-linecap="butt" stroke-linejoin="round"/></svg>
<div class="t" style="left:66.0px;top:777.95px;font-size:14px;font-weight:400;color:#6a6a6a;">Rules &amp; Playbooks</div>
<svg style="position:absolute;left:24px;top:810px;" width="30" height="30" viewBox="0 0 994 994"><path d="M297 600 V335 Q297 218 462 218 Q627 218 627 335 V600" fill="none" stroke="#6b6b6b" stroke-width="56" stroke-linecap="butt" stroke-linejoin="round"/><path d="M200 660 L282 586 H645 L725 660 Z" fill="#6b6b6b"/><path d="M398 700 H528 Q528 752 463 752 Q398 752 398 700 Z" fill="#6b6b6b"/><path d="M438 108 L500 140 L515 200 H412 Z" fill="#6b6b6b"/></svg>
<div class="t" style="left:66.0px;top:815.95px;font-size:14px;font-weight:400;color:#6a6a6a;">System Notifications</div>
<svg style="position:absolute;left:24px;top:848px;" width="30" height="30" viewBox="0 0 994 994"><path d="M397.6 201.5 L393.9 113.9 L526.1 113.9 L522.4 201.5 L622.3 259.2 L696.3 212.2 L762.4 326.7 L684.7 367.3 L684.7 482.7 L762.4 523.3 L696.3 637.8 L622.3 590.8 L522.4 648.5 L526.1 736.1 L393.9 736.1 L397.6 648.5 L297.7 590.8 L223.7 637.8 L157.6 523.3 L235.3 482.7 L235.3 367.3 L157.6 326.7 L223.7 212.2 L297.7 259.2 Z" fill="none" stroke="#6b6b6b" stroke-width="56" stroke-linecap="round" stroke-linejoin="round"/><circle cx="460" cy="425" r="100" fill="#6b6b6b"/></svg>
<div class="t" style="left:66.0px;top:853.95px;font-size:14px;font-weight:400;color:#6a6a6a;">Global Settings</div>
<div style="position:absolute;left:1407px;top:13px;width:300px;height:40px;box-sizing:border-box;border:1px solid #cfcfcf;border-radius:8px;background:#fff"></div>
<svg style="position:absolute;left:1420px;top:20px;" width="24" height="24" viewBox="0 0 24 24"><path d="M15.5 14h-.79l-.28-.27C15.41 12.59 16 11.11 16 9.5 16 5.91 13.09 3 9.5 3S3 5.91 3 9.5 5.91 16 9.5 16c1.61 0 3.09-.59 4.23-1.57l.27.28v.79l5 4.99L20.49 19l-4.99-5zm-6 0C7.01 14 5 11.99 5 9.5S7.01 5 9.5 5 14 7.01 14 9.5 11.99 14 9.5 14z" fill="#6b6b6b"/></svg>
<div class="t" style="left:1454.0px;top:26.30px;font-size:15px;font-weight:400;color:#6b6b6b;">Search &amp; command</div>
<div class="t" style="left:262.8px;top:82.29px;font-size:28px;font-weight:700;color:#22134c;letter-spacing:-0.213px;">Identities</div>
<div style="position:absolute;left:262px;top:128px;width:300px;height:40px;box-sizing:border-box;border:1px solid #c9c9c9;border-radius:6px;background:#f6f6f7"></div>
<svg style="position:absolute;left:276px;top:136px;" width="24" height="24" viewBox="0 0 24 24"><path d="M15.5 14h-.79l-.28-.27C15.41 12.59 16 11.11 16 9.5 16 5.91 13.09 3 9.5 3S3 5.91 3 9.5 5.91 16 9.5 16c1.61 0 3.09-.59 4.23-1.57l.27.28v.79l5 4.99L20.49 19l-4.99-5zm-6 0C7.01 14 5 11.99 5 9.5S7.01 5 9.5 5 14 7.01 14 9.5 11.99 14 9.5 14z" fill="#6b6b6b"/></svg>
<div class="t" style="left:308.4px;top:139.65px;font-size:16px;font-weight:400;color:#8a8a94;letter-spacing:-0.139px;">Search</div>
<div style="position:absolute;left:262px;top:249px;width:89px;height:40px;background:#fff;border-radius:6px;box-shadow:0 1px 3px rgba(0,0,0,0.25),0 1px 1px rgba(0,0,0,0.1);"></div>
<svg style="position:absolute;left:272px;top:260px;" width="18" height="18" viewBox="0 0 24 24"><path d="M3 17v2h6v-2H3zM3 5v2h10V5H3zm10 16v-2h8v-2h-8v-2h-2v6h2zM7 9v2H3v2h4v2h2V9H7zm14 4v-2H11v2h10zm-6-4h2V7h4V5h-4V3h-2v6z" fill="#1a1a1a"/></svg>
<div class="t" style="left:298.5px;top:261.60px;font-size:15px;font-weight:700;color:#222;letter-spacing:-0.919px;">Filters</div>
<div style="position:absolute;left:359px;top:249px;width:240px;height:40px;box-sizing:border-box;border:1px solid #c9c9c9;border-radius:6px;background:#f6f6f7"></div>
<svg style="position:absolute;left:365px;top:257px;" width="23" height="23" viewBox="0 0 24 24"><path d="M17 3H5c-1.11 0-2 .9-2 2v14c0 1.1.89 2 2 2h14c1.1 0 2-.9 2-2V7l-4-4zm-5 16c-1.66 0-3-1.34-3-3s1.34-3 3-3 3 1.34 3 3-1.34 3-3 3zm3-10H5V5h10v4z" fill="#22134c"/></svg>
<div class="t" style="left:397.2px;top:260.95px;font-size:16px;font-weight:400;color:#8a8a94;letter-spacing:0.163px;">Saved filters</div>
<svg style="position:absolute;left:566px;top:262px;" width="24" height="16" viewBox="0 0 24 16"><path d="M6.5 4 L11.5 9.5 L16.5 4 Z" fill="#555"/></svg>
<div style="position:absolute;left:607px;top:249px;width:115px;height:40px;background:#e0e0e0;border-radius:6px"></div>
<svg style="position:absolute;left:617px;top:260px;" width="18" height="18" viewBox="0 0 24 24"><path d="M17 3H5c-1.11 0-2 .9-2 2v14c0 1.1.89 2 2 2h14c1.1 0 2-.9 2-2V7l-4-4zm-5 16c-1.66 0-3-1.34-3-3s1.34-3 3-3 3 1.34 3 3-1.34 3-3 3zm3-10H5V5h10v4z" fill="#a6a6a6"/></svg>
<div class="t" style="left:643.3px;top:261.60px;font-size:15px;font-weight:700;color:#a6a6a6;letter-spacing:-0.511px;">Save filter</div>
<div style="position:absolute;left:730px;top:249px;width:120px;height:40px;background:#fff;border-radius:6px;box-shadow:0 1px 3px rgba(0,0,0,0.25),0 1px 1px rgba(0,0,0,0.1);"></div>
<svg style="position:absolute;left:744px;top:259px;" width="20" height="20" viewBox="0 0 20 20"><circle cx="10" cy="10" r="10" fill="#151515"/><path d="M10 4.6 V11.2 M7 8.4 L10 11.4 L13 8.4" fill="none" stroke="#fff" stroke-width="1.9" stroke-linecap="round" stroke-linejoin="round"/><path d="M6 14 H14" stroke="#fff" stroke-width="1.9" stroke-linecap="round"/></svg>
<div class="t" style="left:771.5px;top:261.60px;font-size:15px;font-weight:700;color:#222;letter-spacing:-0.705px;">5 selected</div>
<div style="position:absolute;left:858px;top:249px;width:158px;height:40px;background:#fff;border-radius:6px;box-shadow:0 1px 3px rgba(0,0,0,0.25),0 1px 1px rgba(0,0,0,0.1);"></div>
<svg style="position:absolute;left:871px;top:261px;" width="17" height="17" viewBox="0 0 17 17"><circle cx="8.5" cy="8.5" r="8.3" fill="#151515"/><path d="M8.5 4.5 V12.5 M4.5 8.5 H12.5" stroke="#fff" stroke-width="2"/></svg>
<div class="t" style="left:895.5px;top:261.60px;font-size:15px;font-weight:700;color:#222;letter-spacing:-0.526px;">Create review(s)</div>
<div style="position:absolute;left:262px;top:305px;width:1700px;height:720px;box-sizing:border-box;border:1px solid #dcdcdc;border-radius:12px;background:#fff"></div>
<div style="position:absolute;left:263px;top:353px;width:1700px;height:1px;background:#dcdcdc"></div>
<div class="t" style="left:320.4px;top:322.25px;font-size:14px;font-weight:700;color:#22134c;letter-spacing:-0.1px;">Identity</div>
<div class="t" style="left:532.2px;top:322.25px;font-size:14px;font-weight:700;color:#22134c;letter-spacing:-0.1px;width:83px;overflow:hidden;">Identity Name</div>
<div class="t" style="left:682.6px;top:322.25px;font-size:14px;font-weight:700;color:#22134c;letter-spacing:-0.1px;">Status</div>
<div class="t" style="left:834.6px;top:322.25px;font-size:14px;font-weight:700;color:#22134c;letter-spacing:-0.1px;">Person</div>
<div class="t" style="left:986.5px;top:322.25px;font-size:14px;font-weight:700;color:#22134c;letter-spacing:-0.1px;">Application</div>
<div class="t" style="left:1137.0px;top:322.25px;font-size:14px;font-weight:700;color:#22134c;letter-spacing:-0.1px;">Insights</div>
<div class="t" style="left:1288.4px;top:322.25px;font-size:14px;font-weight:700;color:#22134c;letter-spacing:-0.1px;">Manager</div>
<div class="t" style="left:1439.5px;top:322.25px;font-size:14px;font-weight:700;color:#22134c;letter-spacing:-0.1px;">Job Title</div>
<div style="position:absolute;left:506px;top:320px;width:2px;height:20px;background:#d6d6d6;border-radius:1px"></div>
<div style="position:absolute;left:657px;top:320px;width:2px;height:20px;background:#d6d6d6;border-radius:1px"></div>
<div style="position:absolute;left:808px;top:320px;width:2px;height:20px;background:#d6d6d6;border-radius:1px"></div>
<div style="position:absolute;left:960px;top:320px;width:2px;height:20px;background:#d6d6d6;border-radius:1px"></div>
<div style="position:absolute;left:1111px;top:320px;width:2px;height:20px;background:#d6d6d6;border-radius:1px"></div>
<div style="position:absolute;left:1262px;top:320px;width:2px;height:20px;background:#d6d6d6;border-radius:1px"></div>
<div style="position:absolute;left:1413.5px;top:320px;width:2px;height:20px;background:#d6d6d6;border-radius:1px"></div>
<svg style="position:absolute;left:282px;top:322.5px;" width="13" height="13" viewBox="0 0 13 13"><rect x="0.1" y="0.4" width="11.8" height="11.8" rx="1.8" fill="#22134c"/><rect x="2.6" y="5.4" width="6.8" height="1.9" fill="#fff"/></svg>
<div style="position:absolute;left:263px;top:409px;width:1700px;height:1px;background:#dedede"></div>
<svg style="position:absolute;left:282px;top:374.5px;" width="13" height="13" viewBox="0 0 13 13"><rect x="0.85" y="1.2" width="10.2" height="10.2" rx="1.3" fill="none" stroke="#6a6a6a" stroke-width="1.5"/></svg>
<div class="t" style="left:320.6px;top:364.35px;font-size:14px;font-weight:700;color:#22134c;letter-spacing:-0.15px;">clinton.davies@adminb...</div>
<svg style="position:absolute;left:320px;top:381px;" width="17" height="17" viewBox="0 0 24 24"><path d="M11 18h2v-2h-2v2zm1-16C6.48 2 2 6.48 2 12s4.48 10 10 10 10-4.48 10-10S17.52 2 12 2zm0 18c-4.41 0-8-3.59-8-8s3.59-8 8-8 8 3.59 8 8-3.59 8-8 8zm0-14c-2.21 0-4 1.79-4 4h2c0-1.1.9-2 2-2s2 .9 2 2c0 2-3 1.75-3 5h2c0-2.25 3-2.5 3-5 0-2.21-1.79-4-4-4z" fill="#5e5e5e"/></svg>
<div class="t" style="left:342.5px;top:382.05px;font-size:14px;font-weight:400;color:#787878;letter-spacing:0.3px;">Unmapped</div>
<div class="t" style="left:532.2px;top:365.45px;font-size:14px;font-weight:400;color:#22134c;letter-spacing:0.18px;">Clinton Davies</div>
<div class="t" style="left:532.2px;top:382.35px;font-size:14px;font-weight:400;color:#787878;letter-spacing:0.18px;">clinton.davies@...</div>
<div style="position:absolute;left:687px;top:369px;width:81px;height:24px;box-sizing:border-box;border:1px solid #e2e2e2;border-radius:12px;background:#f3f3f3"></div>
<div style="position:absolute;left:695px;top:375px;width:12px;height:12px;background:#585862;border-radius:50%"></div>
<div class="t" style="left:714.5px;top:374.39px;font-size:13px;font-weight:400;color:#50505e;letter-spacing:-0.072px;">Inactive</div>
<svg style="position:absolute;left:987px;top:368px;" width="28" height="27" viewBox="0 0 28 27"><defs><linearGradient id="az1" x1="0" y1="0" x2="0" y2="1"><stop offset="0" stop-color="#114a8b"/><stop offset="1" stop-color="#0669bc"/></linearGradient>
<linearGradient id="az2" x1="0" y1="0" x2="1" y2="1"><stop offset="0" stop-color="#3ccbf4"/><stop offset="1" stop-color="#2892df"/></linearGradient></defs>
<path d="M9.3 0.4 H17.4 L9 26.2 H0.6 Q0 26.2 0.2 25.6 L8.3 1.1 Q8.5 0.4 9.3 0.4 Z" fill="url(#az1)"/>
<path d="M20.9 17.5 H8.6 Q8.2 17.5 8.5 17.8 L16.4 25.2 Q16.8 25.6 17.4 25.6 H24.6 Z" fill="#0078d4"/>
<path d="M17.4 0.4 Q18.3 0.4 18.6 1.2 L27.4 25.5 Q27.6 26.2 26.9 26.2 H18.6 Q19.3 26.2 19.1 25.5 L10.3 1.2 Q10 0.4 9.2 0.4 Z" fill="url(#az2)"/></svg>
<div class="t" style="left:1025.8px;top:365.15px;font-size:14px;font-weight:700;color:#22134c;">Azure</div>
<div class="t" style="left:1025.8px;top:381.95px;font-size:14px;font-weight:400;color:#787878;letter-spacing:0.18px;">Test envi...</div>
<div style="position:absolute;left:263px;top:465px;width:1700px;height:1px;background:#dedede"></div>
<svg style="position:absolute;left:282px;top:430.5px;" width="13" height="13" viewBox="0 0 13 13"><rect x="0.85" y="1.2" width="10.2" height="10.2" rx="1.3" fill="none" stroke="#6a6a6a" stroke-width="1.5"/></svg>
<div class="t" style="left:320.6px;top:420.35px;font-size:14px;font-weight:700;color:#22134c;letter-spacing:-0.15px;">suhailh</div>
<svg style="position:absolute;left:320px;top:437px;" width="18" height="18" viewBox="0 0 24 24"><path d="M20 18c1.1 0 1.99-.9 1.99-2L22 6c0-1.1-.9-2-2-2H4c-1.1 0-2 .9-2 2v10c0 1.1.9 2 2 2H0v2h24v-2h-4zM4 6h16v10H4V6z" fill="#5e5e5e"/></svg>
<div class="t" style="left:342.5px;top:438.05px;font-size:14px;font-weight:400;color:#787878;letter-spacing:0.3px;">Service Account</div>
<div class="t" style="left:532.2px;top:430.55px;font-size:14px;font-weight:400;color:#787878;letter-spacing:0.18px;">suhailh@gmail.c...</div>
<div class="t" style="left:834.9px;top:420.95px;font-size:14px;font-weight:400;color:#22134c;letter-spacing:0.18px;">Subramanian ...</div>
<div class="t" style="left:834.9px;top:438.35px;font-size:14px;font-weight:400;color:#787878;letter-spacing:0.18px;">subbu@balkan...</div>
<svg style="position:absolute;left:982px;top:423px;" width="30" height="30" viewBox="0 0 30 30"><line x1="11.20" y1="7.80" x2="17.90" y2="23.90" stroke="#22b893" stroke-width="4.6" stroke-linecap="round"/><line x1="9.90" y1="13.20" x2="25.60" y2="7.30" stroke="#30b8d8" stroke-width="4.6" stroke-linecap="round"/><line x1="20.60" y1="4.50" x2="26.30" y2="20.60" stroke="#ecb22e" stroke-width="4.6" stroke-linecap="round"/><line x1="12.60" y1="21.00" x2="28.00" y2="15.60" stroke="#e01e5a" stroke-width="4.6" stroke-linecap="round"/><line x1="21.90" y1="8.20" x2="23.20" y2="11.60" stroke="#22b893" stroke-width="4.2" stroke-linecap="round"/><line x1="14.20" y1="17.00" x2="16.40" y2="22.00" stroke="#22b893" stroke-width="1.0" stroke-linecap="round"/></svg>
<div class="t" style="left:1025.8px;top:421.15px;font-size:14px;font-weight:700;color:#22134c;">Slack</div>
<div class="t" style="left:1025.8px;top:437.95px;font-size:14px;font-weight:400;color:#787878;letter-spacing:0.18px;">BalkanI...</div>
<div style="position:absolute;left:1137px;top:425px;width:86px;height:24px;box-sizing:border-box;border:1px solid #bccfee;border-radius:12px;background:#dce7fb"></div>
<svg style="position:absolute;left:1143px;top:429.5px;" width="15" height="15" viewBox="0 0 24 24"><path d="M12 12c2.21 0 4-1.79 4-4s-1.79-4-4-4-4 1.79-4 4 1.79 4 4 4zm0 2c-2.67 0-8 1.34-8 4v2h16v-2c0-2.66-5.33-4-8-4z" fill="#2a5cb8"/></svg>
<div class="t" style="left:1163.8px;top:430.59px;font-size:13px;font-weight:400;color:#2a5cb8;letter-spacing:0.015px;">Manager</div>
<div class="t" style="left:1439.5px;top:430.15px;font-size:14px;font-weight:400;color:#22134c;">CEO</div>
<div style="position:absolute;left:263px;top:466px;width:1700px;height:55px;background:#eae6fe"></div>
<div style="position:absolute;left:263px;top:521px;width:1700px;height:1px;background:#dedede"></div>
<svg style="position:absolute;left:282px;top:486.5px;" width="13" height="13" viewBox="0 0 13 13"><rect x="0.1" y="0.4" width="11.8" height="11.8" rx="1.8" fill="#22134c"/><path d="M2.5 6.4 L4.9 8.8 L9.6 3.9" fill="none" stroke="#fff" stroke-width="1.7"/></svg>
<div class="t" style="left:320.6px;top:476.35px;font-size:14px;font-weight:700;color:#22134c;letter-spacing:-0.15px;">suhailh</div>
<svg style="position:absolute;left:320px;top:493px;" width="17" height="17" viewBox="0 0 24 24"><path d="M11 18h2v-2h-2v2zm1-16C6.48 2 2 6.48 2 12s4.48 10 10 10 10-4.48 10-10S17.52 2 12 2zm0 18c-4.41 0-8-3.59-8-8s3.59-8 8-8 8 3.59 8 8-3.59 8-8 8zm0-14c-2.21 0-4 1.79-4 4h2c0-1.1.9-2 2-2s2 .9 2 2c0 2-3 1.75-3 5h2c0-2.25 3-2.5 3-5 0-2.21-1.79-4-4-4z" fill="#5e5e5e"/></svg>
<div class="t" style="left:342.5px;top:494.05px;font-size:14px;font-weight:400;color:#787878;letter-spacing:0.3px;">Unmapped</div>
<div class="t" style="left:532.2px;top:486.55px;font-size:14px;font-weight:400;color:#787878;letter-spacing:0.18px;">suhailh@gmail.c...</div>
<svg style="position:absolute;left:982px;top:479px;" width="30" height="30" viewBox="0 0 30 30"><line x1="11.20" y1="7.80" x2="17.90" y2="23.90" stroke="#22b893" stroke-width="4.6" stroke-linecap="round"/><line x1="9.90" y1="13.20" x2="25.60" y2="7.30" stroke="#30b8d8" stroke-width="4.6" stroke-linecap="round"/><line x1="20.60" y1="4.50" x2="26.30" y2="20.60" stroke="#ecb22e" stroke-width="4.6" stroke-linecap="round"/><line x1="12.60" y1="21.00" x2="28.00" y2="15.60" stroke="#e01e5a" stroke-width="4.6" stroke-linecap="round"/><line x1="21.90" y1="8.20" x2="23.20" y2="11.60" stroke="#22b893" stroke-width="4.2" stroke-linecap="round"/><line x1="14.20" y1="17.00" x2="16.40" y2="22.00" stroke="#22b893" stroke-width="1.0" stroke-linecap="round"/></svg>
<div class="t" style="left:1025.8px;top:477.15px;font-size:14px;font-weight:700;color:#22134c;">Slack</div>
<div class="t" style="left:1025.8px;top:493.95px;font-size:14px;font-weight:400;color:#787878;letter-spacing:0.18px;">Peter Sl...</div>
<div style="position:absolute;left:263px;top:522px;width:1700px;height:55px;background:#eae6fe"></div>
<div style="position:absolute;left:263px;top:577px;width:1700px;height:1px;background:#dedede"></div>
<svg style="position:absolute;left:282px;top:542.5px;" width="13" height="13" viewBox="0 0 13 13"><rect x="0.1" y="0.4" width="11.8" height="11.8" rx="1.8" fill="#22134c"/><path d="M2.5 6.4 L4.9 8.8 L9.6 3.9" fill="none" stroke="#fff" stroke-width="1.7"/></svg>
<div class="t" style="left:320.6px;top:532.35px;font-size:14px;font-weight:700;color:#22134c;letter-spacing:-0.15px;">erin.olson@adminbalka...</div>
<svg style="position:absolute;left:320px;top:549px;" width="17" height="17" viewBox="0 0 24 24"><path d="M11 18h2v-2h-2v2zm1-16C6.48 2 2 6.48 2 12s4.48 10 10 10 10-4.48 10-10S17.52 2 12 2zm0 18c-4.41 0-8-3.59-8-8s3.59-8 8-8 8 3.59 8 8-3.59 8-8 8zm0-14c-2.21 0-4 1.79-4 4h2c0-1.1.9-2 2-2s2 .9 2 2c0 2-3 1.75-3 5h2c0-2.25 3-2.5 3-5 0-2.21-1.79-4-4-4z" fill="#5e5e5e"/></svg>
<div class="t" style="left:342.5px;top:550.05px;font-size:14px;font-weight:400;color:#787878;letter-spacing:0.3px;">Unmapped</div>
<div class="t" style="left:532.2px;top:533.45px;font-size:14px;font-weight:400;color:#22134c;letter-spacing:0.18px;">Erin Olson</div>
<div class="t" style="left:532.2px;top:550.35px;font-size:14px;font-weight:400;color:#787878;letter-spacing:0.18px;">erin.olson@admi...</div>
<div style="position:absolute;left:687px;top:537px;width:81px;height:24px;box-sizing:border-box;border:1px solid #e2e2e2;border-radius:12px;background:#f3f3f3"></div>
<div style="position:absolute;left:695px;top:543px;width:12px;height:12px;background:#585862;border-radius:50%"></div>
<div class="t" style="left:714.5px;top:542.39px;font-size:13px;font-weight:400;color:#50505e;letter-spacing:-0.072px;">Inactive</div>
<svg style="position:absolute;left:987px;top:536px;" width="28" height="27" viewBox="0 0 28 27"><defs><linearGradient id="az1" x1="0" y1="0" x2="0" y2="1"><stop offset="0" stop-color="#114a8b"/><stop offset="1" stop-color="#0669bc"/></linearGradient>
<linearGradient id="az2" x1="0" y1="0" x2="1" y2="1"><stop offset="0" stop-color="#3ccbf4"/><stop offset="1" stop-color="#2892df"/></linearGradient></defs>
<path d="M9.3 0.4 H17.4 L9 26.2 H0.6 Q0 26.2 0.2 25.6 L8.3 1.1 Q8.5 0.4 9.3 0.4 Z" fill="url(#az1)"/>
<path d="M20.9 17.5 H8.6 Q8.2 17.5 8.5 17.8 L16.4 25.2 Q16.8 25.6 17.4 25.6 H24.6 Z" fill="#0078d4"/>
<path d="M17.4 0.4 Q18.3 0.4 18.6 1.2 L27.4 25.5 Q27.6 26.2 26.9 26.2 H18.6 Q19.3 26.2 19.1 25.5 L10.3 1.2 Q10 0.4 9.2 0.4 Z" fill="url(#az2)"/></svg>
<div class="t" style="left:1025.8px;top:533.15px;font-size:14px;font-weight:700;color:#22134c;">Azure</div>
<div class="t" style="left:1025.8px;top:549.95px;font-size:14px;font-weight:400;color:#787878;letter-spacing:0.18px;">Test envi...</div>
<div style="position:absolute;left:263px;top:578px;width:1700px;height:55px;background:#eae6fe"></div>
<div style="position:absolute;left:263px;top:633px;width:1700px;height:1px;background:#dedede"></div>
<svg style="position:absolute;left:282px;top:598.5px;" width="13" height="13" viewBox="0 0 13 13"><rect x="0.1" y="0.4" width="11.8" height="11.8" rx="1.8" fill="#22134c"/><path d="M2.5 6.4 L4.9 8.8 L9.6 3.9" fill="none" stroke="#fff" stroke-width="1.7"/></svg>
<div class="t" style="left:320.6px;top:588.35px;font-size:14px;font-weight:700;color:#22134c;letter-spacing:-0.15px;">harold.haney@adminb...</div>
<svg style="position:absolute;left:320px;top:605px;" width="17" height="17" viewBox="0 0 24 24"><path d="M11 18h2v-2h-2v2zm1-16C6.48 2 2 6.48 2 12s4.48 10 10 10 10-4.48 10-10S17.52 2 12 2zm0 18c-4.41 0-8-3.59-8-8s3.59-8 8-8 8 3.59 8 8-3.59 8-8 8zm0-14c-2.21 0-4 1.79-4 4h2c0-1.1.9-2 2-2s2 .9 2 2c0 2-3 1.75-3 5h2c0-2.25 3-2.5 3-5 0-2.21-1.79-4-4-4z" fill="#5e5e5e"/></svg>
<div class="t" style="left:342.5px;top:606.05px;font-size:14px;font-weight:400;color:#787878;letter-spacing:0.3px;">Unmapped</div>
<div class="t" style="left:532.2px;top:589.45px;font-size:14px;font-weight:400;color:#22134c;letter-spacing:0.18px;">Harold Haney</div>
<div class="t" style="left:532.2px;top:606.35px;font-size:14px;font-weight:400;color:#787878;letter-spacing:0.18px;">harold.haney@a...</div>
<div style="position:absolute;left:687px;top:593px;width:81px;height:24px;box-sizing:border-box;border:1px solid #e2e2e2;border-radius:12px;background:#f3f3f3"></div>
<div style="position:absolute;left:695px;top:599px;width:12px;height:12px;background:#585862;border-radius:50%"></div>
<div class="t" style="left:714.5px;top:598.39px;font-size:13px;font-weight:400;color:#50505e;letter-spacing:-0.072px;">Inactive</div>
<svg style="position:absolute;left:987px;top:592px;" width="28" height="27" viewBox="0 0 28 27"><defs><linearGradient id="az1" x1="0" y1="0" x2="0" y2="1"><stop offset="0" stop-color="#114a8b"/><stop offset="1" stop-color="#0669bc"/></linearGradient>
<linearGradient id="az2" x1="0" y1="0" x2="1" y2="1"><stop offset="0" stop-color="#3ccbf4"/><stop offset="1" stop-color="#2892df"/></linearGradient></defs>
<path d="M9.3 0.4 H17.4 L9 26.2 H0.6 Q0 26.2 0.2 25.6 L8.3 1.1 Q8.5 0.4 9.3 0.4 Z" fill="url(#az1)"/>
<path d="M20.9 17.5 H8.6 Q8.2 17.5 8.5 17.8 L16.4 25.2 Q16.8 25.6 17.4 25.6 H24.6 Z" fill="#0078d4"/>
<path d="M17.4 0.4 Q18.3 0.4 18.6 1.2 L27.4 25.5 Q27.6 26.2 26.9 26.2 H18.6 Q19.3 26.2 19.1 25.5 L10.3 1.2 Q10 0.4 9.2 0.4 Z" fill="url(#az2)"/></svg>
<div class="t" style="left:1025.8px;top:589.15px;font-size:14px;font-weight:700;color:#22134c;">Azure</div>
<div class="t" style="left:1025.8px;top:605.95px;font-size:14px;font-weight:400;color:#787878;letter-spacing:0.18px;">Test envi...</div>
<div style="position:absolute;left:263px;top:634px;width:1700px;height:55px;background:#eae6fe"></div>
<div style="position:absolute;left:263px;top:689px;width:1700px;height:1px;background:#dedede"></div>
<svg style="position:absolute;left:282px;top:654.5px;" width="13" height="13" viewBox="0 0 13 13"><rect x="0.1" y="0.4" width="11.8" height="11.8" rx="1.8" fill="#22134c"/><path d="M2.5 6.4 L4.9 8.8 L9.6 3.9" fill="none" stroke="#fff" stroke-width="1.7"/></svg>
<div class="t" style="left:320.6px;top:644.35px;font-size:14px;font-weight:700;color:#22134c;letter-spacing:-0.15px;">matthew.beasley@balk...</div>
<svg style="position:absolute;left:320px;top:661px;" width="17" height="17" viewBox="0 0 24 24"><path d="M11 18h2v-2h-2v2zm1-16C6.48 2 2 6.48 2 12s4.48 10 10 10 10-4.48 10-10S17.52 2 12 2zm0 18c-4.41 0-8-3.59-8-8s3.59-8 8-8 8 3.59 8 8-3.59 8-8 8zm0-14c-2.21 0-4 1.79-4 4h2c0-1.1.9-2 2-2s2 .9 2 2c0 2-3 1.75-3 5h2c0-2.25 3-2.5 3-5 0-2.21-1.79-4-4-4z" fill="#5e5e5e"/></svg>
<div class="t" style="left:342.5px;top:662.05px;font-size:14px;font-weight:400;color:#787878;letter-spacing:0.3px;">Unmapped</div>
<div class="t" style="left:532.2px;top:645.45px;font-size:14px;font-weight:400;color:#22134c;letter-spacing:0.18px;">Matthew Beasley</div>
<div class="t" style="left:532.2px;top:662.35px;font-size:14px;font-weight:400;color:#787878;letter-spacing:0.18px;">matthew.beasle...</div>
<div style="position:absolute;left:687px;top:649px;width:81px;height:24px;box-sizing:border-box;border:1px solid #e2e2e2;border-radius:12px;background:#f3f3f3"></div>
<div style="position:absolute;left:695px;top:655px;width:12px;height:12px;background:#585862;border-radius:50%"></div>
<div class="t" style="left:714.5px;top:654.39px;font-size:13px;font-weight:400;color:#50505e;letter-spacing:-0.072px;">Inactive</div>
<svg style="position:absolute;left:987px;top:648px;" width="28" height="27" viewBox="0 0 28 27"><defs><linearGradient id="az1" x1="0" y1="0" x2="0" y2="1"><stop offset="0" stop-color="#114a8b"/><stop offset="1" stop-color="#0669bc"/></linearGradient>
<linearGradient id="az2" x1="0" y1="0" x2="1" y2="1"><stop offset="0" stop-color="#3ccbf4"/><stop offset="1" stop-color="#2892df"/></linearGradient></defs>
<path d="M9.3 0.4 H17.4 L9 26.2 H0.6 Q0 26.2 0.2 25.6 L8.3 1.1 Q8.5 0.4 9.3 0.4 Z" fill="url(#az1)"/>
<path d="M20.9 17.5 H8.6 Q8.2 17.5 8.5 17.8 L16.4 25.2 Q16.8 25.6 17.4 25.6 H24.6 Z" fill="#0078d4"/>
<path d="M17.4 0.4 Q18.3 0.4 18.6 1.2 L27.4 25.5 Q27.6 26.2 26.9 26.2 H18.6 Q19.3 26.2 19.1 25.5 L10.3 1.2 Q10 0.4 9.2 0.4 Z" fill="url(#az2)"/></svg>
<div class="t" style="left:1025.8px;top:645.15px;font-size:14px;font-weight:700;color:#22134c;">Azure</div>
<div class="t" style="left:1025.8px;top:661.95px;font-size:14px;font-weight:400;color:#787878;letter-spacing:0.18px;">Test envi...</div>
<div style="position:absolute;left:263px;top:690px;width:1700px;height:55px;background:#eae6fe"></div>
<div style="position:absolute;left:263px;top:745px;width:1700px;height:1px;background:#dedede"></div>
<svg style="position:absolute;left:282px;top:710.5px;" width="13" height="13" viewBox="0 0 13 13"><rect x="0.1" y="0.4" width="11.8" height="11.8" rx="1.8" fill="#22134c"/><path d="M2.5 6.4 L4.9 8.8 L9.6 3.9" fill="none" stroke="#fff" stroke-width="1.7"/></svg>
<div class="t" style="left:320.6px;top:700.35px;font-size:14px;font-weight:700;color:#22134c;letter-spacing:-0.15px;">bobby.wang@itadminb...</div>
<svg style="position:absolute;left:320px;top:717px;" width="17" height="17" viewBox="0 0 24 24"><path d="M11 18h2v-2h-2v2zm1-16C6.48 2 2 6.48 2 12s4.48 10 10 10 10-4.48 10-10S17.52 2 12 2zm0 18c-4.41 0-8-3.59-8-8s3.59-8 8-8 8 3.59 8 8-3.59 8-8 8zm0-14c-2.21 0-4 1.79-4 4h2c0-1.1.9-2 2-2s2 .9 2 2c0 2-3 1.75-3 5h2c0-2.25 3-2.5 3-5 0-2.21-1.79-4-4-4z" fill="#5e5e5e"/></svg>
<div class="t" style="left:342.5px;top:718.05px;font-size:14px;font-weight:400;color:#787878;letter-spacing:0.3px;">Unmapped</div>
<div class="t" style="left:532.2px;top:701.45px;font-size:14px;font-weight:400;color:#22134c;letter-spacing:0.18px;">Bobby Wang</div>
<div class="t" style="left:532.2px;top:718.35px;font-size:14px;font-weight:400;color:#787878;letter-spacing:0.18px;">bobby.wang@it...</div>
<div style="position:absolute;left:687px;top:705px;width:81px;height:24px;box-sizing:border-box;border:1px solid #e2e2e2;border-radius:12px;background:#f3f3f3"></div>
<div style="position:absolute;left:695px;top:711px;width:12px;height:12px;background:#585862;border-radius:50%"></div>
<div class="t" style="left:714.5px;top:710.39px;font-size:13px;font-weight:400;color:#50505e;letter-spacing:-0.072px;">Inactive</div>
<svg style="position:absolute;left:987px;top:704px;" width="28" height="27" viewBox="0 0 28 27"><defs><linearGradient id="az1" x1="0" y1="0" x2="0" y2="1"><stop offset="0" stop-color="#114a8b"/><stop offset="1" stop-color="#0669bc"/></linearGradient>
<linearGradient id="az2" x1="0" y1="0" x2="1" y2="1"><stop offset="0" stop-color="#3ccbf4"/><stop offset="1" stop-color="#2892df"/></linearGradient></defs>
<path d="M9.3 0.4 H17.4 L9 26.2 H0.6 Q0 26.2 0.2 25.6 L8.3 1.1 Q8.5 0.4 9.3 0.4 Z" fill="url(#az1)"/>
<path d="M20.9 17.5 H8.6 Q8.2 17.5 8.5 17.8 L16.4 25.2 Q16.8 25.6 17.4 25.6 H24.6 Z" fill="#0078d4"/>
<path d="M17.4 0.4 Q18.3 0.4 18.6 1.2 L27.4 25.5 Q27.6 26.2 26.9 26.2 H18.6 Q19.3 26.2 19.1 25.5 L10.3 1.2 Q10 0.4 9.2 0.4 Z" fill="url(#az2)"/></svg>
<div class="t" style="left:1025.8px;top:701.15px;font-size:14px;font-weight:700;color:#22134c;">Azure</div>
<div class="t" style="left:1025.8px;top:717.95px;font-size:14px;font-weight:400;color:#787878;letter-spacing:0.18px;">Test envi...</div>
<div style="position:absolute;left:263px;top:801px;width:1700px;height:1px;background:#dedede"></div>
<svg style="position:absolute;left:282px;top:766.5px;" width="13" height="13" viewBox="0 0 13 13"><rect x="0.85" y="1.2" width="10.2" height="10.2" rx="1.3" fill="none" stroke="#6a6a6a" stroke-width="1.5"/></svg>
<div class="t" style="left:320.6px;top:756.35px;font-size:14px;font-weight:700;color:#22134c;letter-spacing:-0.15px;">lacey.green@itadminba...</div>
<svg style="position:absolute;left:320px;top:773px;" width="17" height="17" viewBox="0 0 24 24"><path d="M11 18h2v-2h-2v2zm1-16C6.48 2 2 6.48 2 12s4.48 10 10 10 10-4.48 10-10S17.52 2 12 2zm0 18c-4.41 0-8-3.59-8-8s3.59-8 8-8 8 3.59 8 8-3.59 8-8 8zm0-14c-2.21 0-4 1.79-4 4h2c0-1.1.9-2 2-2s2 .9 2 2c0 2-3 1.75-3 5h2c0-2.25 3-2.5 3-5 0-2.21-1.79-4-4-4z" fill="#5e5e5e"/></svg>
<div class="t" style="left:342.5px;top:774.05px;font-size:14px;font-weight:400;color:#787878;letter-spacing:0.3px;">Unmapped</div>
<div class="t" style="left:532.2px;top:757.45px;font-size:14px;font-weight:400;color:#22134c;letter-spacing:0.18px;">Lacey Green</div>
<div class="t" style="left:532.2px;top:774.35px;font-size:14px;font-weight:400;color:#787878;letter-spacing:0.18px;">lacey.green@ita...</div>
<div style="position:absolute;left:687px;top:761px;width:81px;height:24px;box-sizing:border-box;border:1px solid #e2e2e2;border-radius:12px;background:#f3f3f3"></div>
<div style="position:absolute;left:695px;top:767px;width:12px;height:12px;background:#585862;border-radius:50%"></div>
<div class="t" style="left:714.5px;top:766.39px;font-size:13px;font-weight:400;color:#50505e;letter-spacing:-0.072px;">Inactive</div>
<svg style="position:absolute;left:987px;top:760px;" width="28" height="27" viewBox="0 0 28 27"><defs><linearGradient id="az1" x1="0" y1="0" x2="0" y2="1"><stop offset="0" stop-color="#114a8b"/><stop offset="1" stop-color="#0669bc"/></linearGradient>
<linearGradient id="az2" x1="0" y1="0" x2="1" y2="1"><stop offset="0" stop-color="#3ccbf4"/><stop offset="1" stop-color="#2892df"/></linearGradient></defs>
<path d="M9.3 0.4 H17.4 L9 26.2 H0.6 Q0 26.2 0.2 25.6 L8.3 1.1 Q8.5 0.4 9.3 0.4 Z" fill="url(#az1)"/>
<path d="M20.9 17.5 H8.6 Q8.2 17.5 8.5 17.8 L16.4 25.2 Q16.8 25.6 17.4 25.6 H24.6 Z" fill="#0078d4"/>
<path d="M17.4 0.4 Q18.3 0.4 18.6 1.2 L27.4 25.5 Q27.6 26.2 26.9 26.2 H18.6 Q19.3 26.2 19.1 25.5 L10.3 1.2 Q10 0.4 9.2 0.4 Z" fill="url(#az2)"/></svg>
<div class="t" style="left:1025.8px;top:757.15px;font-size:14px;font-weight:700;color:#22134c;">Azure</div>
<div class="t" style="left:1025.8px;top:773.95px;font-size:14px;font-weight:400;color:#787878;letter-spacing:0.18px;">Test envi...</div>
<div style="position:absolute;left:263px;top:857px;width:1700px;height:1px;background:#dedede"></div>
<svg style="position:absolute;left:282px;top:822.5px;" width="13" height="13" viewBox="0 0 13 13"><rect x="0.85" y="1.2" width="10.2" height="10.2" rx="1.3" fill="none" stroke="#6a6a6a" stroke-width="1.5"/></svg>
<div class="t" style="left:320.6px;top:812.35px;font-size:14px;font-weight:700;color:#22134c;letter-spacing:-0.15px;">shari.blankenship@ad...</div>
<svg style="position:absolute;left:320px;top:829px;" width="17" height="17" viewBox="0 0 24 24"><path d="M11 18h2v-2h-2v2zm1-16C6.48 2 2 6.48 2 12s4.48 10 10 10 10-4.48 10-10S17.52 2 12 2zm0 18c-4.41 0-8-3.59-8-8s3.59-8 8-8 8 3.59 8 8-3.59 8-8 8zm0-14c-2.21 0-4 1.79-4 4h2c0-1.1.9-2 2-2s2 .9 2 2c0 2-3 1.75-3 5h2c0-2.25 3-2.5 3-5 0-2.21-1.79-4-4-4z" fill="#5e5e5e"/></svg>
<div class="t" style="left:342.5px;top:830.05px;font-size:14px;font-weight:400;color:#787878;letter-spacing:0.3px;">Unmapped</div>
<div class="t" style="left:532.2px;top:813.45px;font-size:14px;font-weight:400;color:#22134c;letter-spacing:0.18px;">Shari Blankenship</div>
<div class="t" style="left:532.2px;top:830.35px;font-size:14px;font-weight:400;color:#787878;letter-spacing:0.18px;">shari.blankenshi...</div>
<div style="position:absolute;left:687px;top:817px;width:81px;height:24px;box-sizing:border-box;border:1px solid #e2e2e2;border-radius:12px;background:#f3f3f3"></div>
<div style="position:absolute;left:695px;top:823px;width:12px;height:12px;background:#585862;border-radius:50%"></div>
<div class="t" style="left:714.5px;top:822.39px;font-size:13px;font-weight:400;color:#50505e;letter-spacing:-0.072px;">Inactive</div>
<svg style="position:absolute;left:987px;top:816px;" width="28" height="27" viewBox="0 0 28 27"><defs><linearGradient id="az1" x1="0" y1="0" x2="0" y2="1"><stop offset="0" stop-color="#114a8b"/><stop offset="1" stop-color="#0669bc"/></linearGradient>
<linearGradient id="az2" x1="0" y1="0" x2="1" y2="1"><stop offset="0" stop-color="#3ccbf4"/><stop offset="1" stop-color="#2892df"/></linearGradient></defs>
<path d="M9.3 0.4 H17.4 L9 26.2 H0.6 Q0 26.2 0.2 25.6 L8.3 1.1 Q8.5 0.4 9.3 0.4 Z" fill="url(#az1)"/>
<path d="M20.9 17.5 H8.6 Q8.2 17.5 8.5 17.8 L16.4 25.2 Q16.8 25.6 17.4 25.6 H24.6 Z" fill="#0078d4"/>
<path d="M17.4 0.4 Q18.3 0.4 18.6 1.2 L27.4 25.5 Q27.6 26.2 26.9 26.2 H18.6 Q19.3 26.2 19.1 25.5 L10.3 1.2 Q10 0.4 9.2 0.4 Z" fill="url(#az2)"/></svg>
<div class="t" style="left:1025.8px;top:813.15px;font-size:14px;font-weight:700;color:#22134c;">Azure</div>
<div class="t" style="left:1025.8px;top:829.95px;font-size:14px;font-weight:400;color:#787878;letter-spacing:0.18px;">Test envi...</div>
<div style="position:absolute;left:263px;top:913px;width:1700px;height:1px;background:#dedede"></div>
<svg style="position:absolute;left:282px;top:878.5px;" width="13" height="13" viewBox="0 0 13 13"><rect x="0.85" y="1.2" width="10.2" height="10.2" rx="1.3" fill="none" stroke="#6a6a6a" stroke-width="1.5"/></svg>
<div class="t" style="left:320.6px;top:868.35px;font-size:14px;font-weight:700;color:#22134c;letter-spacing:-0.15px;">mary.campbell@balkan...</div>
<svg style="position:absolute;left:320px;top:885px;" width="17" height="17" viewBox="0 0 24 24"><path d="M11 18h2v-2h-2v2zm1-16C6.48 2 2 6.48 2 12s4.48 10 10 10 10-4.48 10-10S17.52 2 12 2zm0 18c-4.41 0-8-3.59-8-8s3.59-8 8-8 8 3.59 8 8-3.59 8-8 8zm0-14c-2.21 0-4 1.79-4 4h2c0-1.1.9-2 2-2s2 .9 2 2c0 2-3 1.75-3 5h2c0-2.25 3-2.5 3-5 0-2.21-1.79-4-4-4z" fill="#5e5e5e"/></svg>
<div class="t" style="left:342.5px;top:886.05px;font-size:14px;font-weight:400;color:#787878;letter-spacing:0.3px;">Unmapped</div>
<div class="t" style="left:532.2px;top:869.45px;font-size:14px;font-weight:400;color:#22134c;letter-spacing:0.18px;">Mary Campbell</div>
<div class="t" style="left:532.2px;top:886.35px;font-size:14px;font-weight:400;color:#787878;letter-spacing:0.18px;">mary.campbell@...</div>
<div style="position:absolute;left:687px;top:873px;width:81px;height:24px;box-sizing:border-box;border:1px solid #e2e2e2;border-radius:12px;background:#f3f3f3"></div>
<div style="position:absolute;left:695px;top:879px;width:12px;height:12px;background:#585862;border-radius:50%"></div>
<div class="t" style="left:714.5px;top:878.39px;font-size:13px;font-weight:400;color:#50505e;letter-spacing:-0.072px;">Inactive</div>
<svg style="position:absolute;left:987px;top:872px;" width="28" height="27" viewBox="0 0 28 27"><defs><linearGradient id="az1" x1="0" y1="0" x2="0" y2="1"><stop offset="0" stop-color="#114a8b"/><stop offset="1" stop-color="#0669bc"/></linearGradient>
<linearGradient id="az2" x1="0" y1="0" x2="1" y2="1"><stop offset="0" stop-color="#3ccbf4"/><stop offset="1" stop-color="#2892df"/></linearGradient></defs>
<path d="M9.3 0.4 H17.4 L9 26.2 H0.6 Q0 26.2 0.2 25.6 L8.3 1.1 Q8.5 0.4 9.3 0.4 Z" fill="url(#az1)"/>
<path d="M20.9 17.5 H8.6 Q8.2 17.5 8.5 17.8 L16.4 25.2 Q16.8 25.6 17.4 25.6 H24.6 Z" fill="#0078d4"/>
<path d="M17.4 0.4 Q18.3 0.4 18.6 1.2 L27.4 25.5 Q27.6 26.2 26.9 26.2 H18.6 Q19.3 26.2 19.1 25.5 L10.3 1.2 Q10 0.4 9.2 0.4 Z" fill="url(#az2)"/></svg>
<div class="t" style="left:1025.8px;top:869.15px;font-size:14px;font-weight:700;color:#22134c;">Azure</div>
<div class="t" style="left:1025.8px;top:885.95px;font-size:14px;font-weight:400;color:#787878;letter-spacing:0.18px;">Test envi...</div>
<div style="position:absolute;left:263px;top:969px;width:1700px;height:1px;background:#dedede"></div>
<svg style="position:absolute;left:282px;top:934.5px;" width="13" height="13" viewBox="0 0 13 13"><rect x="0.85" y="1.2" width="10.2" height="10.2" rx="1.3" fill="none" stroke="#6a6a6a" stroke-width="1.5"/></svg>
<div class="t" style="left:320.6px;top:924.35px;font-size:14px;font-weight:700;color:#22134c;letter-spacing:-0.15px;">tonya.singleton@balka...</div>
<svg style="position:absolute;left:320px;top:941px;" width="17" height="17" viewBox="0 0 24 24"><path d="M11 18h2v-2h-2v2zm1-16C6.48 2 2 6.48 2 12s4.48 10 10 10 10-4.48 10-10S17.52 2 12 2zm0 18c-4.41 0-8-3.59-8-8s3.59-8 8-8 8 3.59 8 8-3.59 8-8 8zm0-14c-2.21 0-4 1.79-4 4h2c0-1.1.9-2 2-2s2 .9 2 2c0 2-3 1.75-3 5h2c0-2.25 3-2.5 3-5 0-2.21-1.79-4-4-4z" fill="#5e5e5e"/></svg>
<div class="t" style="left:342.5px;top:942.05px;font-size:14px;font-weight:400;color:#787878;letter-spacing:0.3px;">Unmapped</div>
<div class="t" style="left:532.2px;top:925.45px;font-size:14px;font-weight:400;color:#22134c;letter-spacing:0.18px;">Tonya Singleton</div>
<div class="t" style="left:532.2px;top:942.35px;font-size:14px;font-weight:400;color:#787878;letter-spacing:0.18px;">tonya.singleton...</div>
<div style="position:absolute;left:687px;top:929px;width:81px;height:24px;box-sizing:border-box;border:1px solid #e2e2e2;border-radius:12px;background:#f3f3f3"></div>
<div style="position:absolute;left:695px;top:935px;width:12px;height:12px;background:#585862;border-radius:50%"></div>
<div class="t" style="left:714.5px;top:934.39px;font-size:13px;font-weight:400;color:#50505e;letter-spacing:-0.072px;">Inactive</div>
<svg style="position:absolute;left:987px;top:928px;" width="28" height="27" viewBox="0 0 28 27"><defs><linearGradient id="az1" x1="0" y1="0" x2="0" y2="1"><stop offset="0" stop-color="#114a8b"/><stop offset="1" stop-color="#0669bc"/></linearGradient>
<linearGradient id="az2" x1="0" y1="0" x2="1" y2="1"><stop offset="0" stop-color="#3ccbf4"/><stop offset="1" stop-color="#2892df"/></linearGradient></defs>
<path d="M9.3 0.4 H17.4 L9 26.2 H0.6 Q0 26.2 0.2 25.6 L8.3 1.1 Q8.5 0.4 9.3 0.4 Z" fill="url(#az1)"/>
<path d="M20.9 17.5 H8.6 Q8.2 17.5 8.5 17.8 L16.4 25.2 Q16.8 25.6 17.4 25.6 H24.6 Z" fill="#0078d4"/>
<path d="M17.4 0.4 Q18.3 0.4 18.6 1.2 L27.4 25.5 Q27.6 26.2 26.9 26.2 H18.6 Q19.3 26.2 19.1 25.5 L10.3 1.2 Q10 0.4 9.2 0.4 Z" fill="url(#az2)"/></svg>
<div class="t" style="left:1025.8px;top:925.15px;font-size:14px;font-weight:700;color:#22134c;">Azure</div>
<div class="t" style="left:1025.8px;top:941.95px;font-size:14px;font-weight:400;color:#787878;letter-spacing:0.18px;">Test envi...</div>
<div style="position:absolute;left:263px;top:1025px;width:1700px;height:1px;background:#dedede"></div>
<svg style="position:absolute;left:282px;top:990.5px;" width="13" height="13" viewBox="0 0 13 13"><rect x="0.85" y="1.2" width="10.2" height="10.2" rx="1.3" fill="none" stroke="#6a6a6a" stroke-width="1.5"/></svg>
<div class="t" style="left:320.6px;top:980.35px;font-size:14px;font-weight:700;color:#22134c;letter-spacing:-0.15px;">colton.liu@balkanit.on...</div>
<svg style="position:absolute;left:320px;top:997px;" width="17" height="17" viewBox="0 0 24 24"><path d="M11 18h2v-2h-2v2zm1-16C6.48 2 2 6.48 2 12s4.48 10 10 10 10-4.48 10-10S17.52 2 12 2zm0 18c-4.41 0-8-3.59-8-8s3.59-8 8-8 8 3.59 8 8-3.59 8-8 8zm0-14c-2.21 0-4 1.79-4 4h2c0-1.1.9-2 2-2s2 .9 2 2c0 2-3 1.75-3 5h2c0-2.25 3-2.5 3-5 0-2.21-1.79-4-4-4z" fill="#5e5e5e"/></svg>
<div class="t" style="left:342.5px;top:998.05px;font-size:14px;font-weight:400;color:#787878;letter-spacing:0.3px;">Unmapped</div>
<div class="t" style="left:532.2px;top:981.45px;font-size:14px;font-weight:400;color:#22134c;letter-spacing:0.18px;">Colton Liu</div>
<div class="t" style="left:532.2px;top:998.35px;font-size:14px;font-weight:400;color:#787878;letter-spacing:0.18px;">colton.liu@bal...</div>
<div style="position:absolute;left:687px;top:985px;width:81px;height:24px;box-sizing:border-box;border:1px solid #e2e2e2;border-radius:12px;background:#f3f3f3"></div>
<div style="position:absolute;left:695px;top:991px;width:12px;height:12px;background:#585862;border-radius:50%"></div>
<div class="t" style="left:714.5px;top:990.39px;font-size:13px;font-weight:400;color:#50505e;letter-spacing:-0.072px;">Inactive</div>
<svg style="position:absolute;left:987px;top:984px;" width="28" height="27" viewBox="0 0 28 27"><defs><linearGradient id="az1" x1="0" y1="0" x2="0" y2="1"><stop offset="0" stop-color="#114a8b"/><stop offset="1" stop-color="#0669bc"/></linearGradient>
<linearGradient id="az2" x1="0" y1="0" x2="1" y2="1"><stop offset="0" stop-color="#3ccbf4"/><stop offset="1" stop-color="#2892df"/></linearGradient></defs>
<path d="M9.3 0.4 H17.4 L9 26.2 H0.6 Q0 26.2 0.2 25.6 L8.3 1.1 Q8.5 0.4 9.3 0.4 Z" fill="url(#az1)"/>
<path d="M20.9 17.5 H8.6 Q8.2 17.5 8.5 17.8 L16.4 25.2 Q16.8 25.6 17.4 25.6 H24.6 Z" fill="#0078d4"/>
<path d="M17.4 0.4 Q18.3 0.4 18.6 1.2 L27.4 25.5 Q27.6 26.2 26.9 26.2 H18.6 Q19.3 26.2 19.1 25.5 L10.3 1.2 Q10 0.4 9.2 0.4 Z" fill="url(#az2)"/></svg>
<div class="t" style="left:1025.8px;top:981.15px;font-size:14px;font-weight:700;color:#22134c;">Azure</div>
<div class="t" style="left:1025.8px;top:997.95px;font-size:14px;font-weight:400;color:#787878;letter-spacing:0.18px;">Test envi...</div>
<div style="position:absolute;left:0px;top:0px;width:1918px;height:994px;background:rgba(0,0,0,0.5)"></div>
<div style="position:absolute;left:1521px;top:0px;width:397px;height:994px;background:#fff"></div>
<div style="position:absolute;left:1520px;top:0px;width:1px;height:994px;background:rgba(0,0,0,0.07)"></div>
<div style="position:absolute;left:1521px;top:0px;width:1px;height:994px;background:#e9eaf2"></div>
<div style="position:absolute;left:1917px;top:0px;width:1px;height:994px;background:#d9d9e3"></div>
<div style="position:absolute;left:1521px;top:993px;width:397px;height:1px;background:#d9d9e3"></div>
<div class="t" style="left:1546.2px;top:19.67px;font-size:20px;font-weight:700;color:#22134c;letter-spacing:0.141px;">Identity Mapping</div>
<div style="position:absolute;left:1522px;top:56px;width:395px;height:1px;background:#dcdde5"></div>
<div class="t" style="left:1546.0px;top:97.55px;font-size:16px;font-weight:400;color:#7a7a7a;letter-spacing:0.346px;">To be mapped:</div>
<div style="position:absolute;left:1545px;top:128px;width:349px;height:50px;box-sizing:border-box;border:1px solid #dedede;border-radius:7px;background:#fff;box-shadow:0 1px 1px rgba(0,0,0,0.12)"></div>
<div class="t" style="left:1562.5px;top:145.30px;font-size:15px;font-weight:700;color:#22134c;letter-spacing:0.070px;">Unmapped</div>
<div class="t" style="left:1683.0px;top:145.30px;font-size:15px;font-weight:400;color:#22134c;letter-spacing:0.249px;">5 identities across 2 apps</div>
<div class="t" style="left:1546.2px;top:218.85px;font-size:16px;font-weight:700;color:#22134c;letter-spacing:0.042px;">Identity Type</div>
<div style="position:absolute;left:1547px;top:248px;width:345px;height:40px;box-sizing:border-box;border:1px solid #c6c6c6;border-radius:6px;background:#fff"></div>
<div class="t" style="left:1563.4px;top:260.85px;font-size:16px;font-weight:400;color:#bdbdbd;letter-spacing:0.308px;">Choose an identity type</div>
<svg style="position:absolute;left:1864px;top:264px;" width="14" height="9" viewBox="0 0 14 9"><path d="M2 1.1 L7 6.2 L12 1.1 Z" fill="#6b6b6b"/></svg>
<div class="t" style="left:1546.0px;top:305.85px;font-size:16px;font-weight:700;color:#22134c;">User</div>
<div style="position:absolute;left:1547px;top:336px;width:345px;height:40px;box-sizing:border-box;border:1px solid #c6c6c6;border-radius:6px;background:#fff"></div>
<div class="t" style="left:1563.4px;top:347.85px;font-size:16px;font-weight:400;color:#bdbdbd;">Select a User</div>
<svg style="position:absolute;left:1864px;top:352px;" width="14" height="9" viewBox="0 0 14 9"><path d="M2 1.1 L7 6.2 L12 1.1 Z" fill="#6b6b6b"/></svg>
<div style="position:absolute;left:1522px;top:824px;width:395px;height:1px;background:#dcdde5"></div>
<div style="position:absolute;left:1546px;top:849px;width:347px;height:48px;box-sizing:border-box;border:1px solid #d6d6d6;border-radius:7px;background:#fff"></div>
<div class="t" style="left:1590.9px;top:865.80px;font-size:15px;font-weight:700;color:#bdbdbd;letter-spacing:0.104px;">Map identities to Application Owner</div>
<div style="position:absolute;left:1546px;top:921px;width:347px;height:48px;background:#e0e0e0;border-radius:7px"></div>
<div class="t" style="left:1669.5px;top:937.30px;font-size:15px;font-weight:700;color:#a6a6a6;letter-spacing:-0.001px;">Map identities</div>
<div style="position:absolute;left:0px;top:0px;width:1918px;height:1px;background:#3a3a3a"></div>
</div></body></html>
